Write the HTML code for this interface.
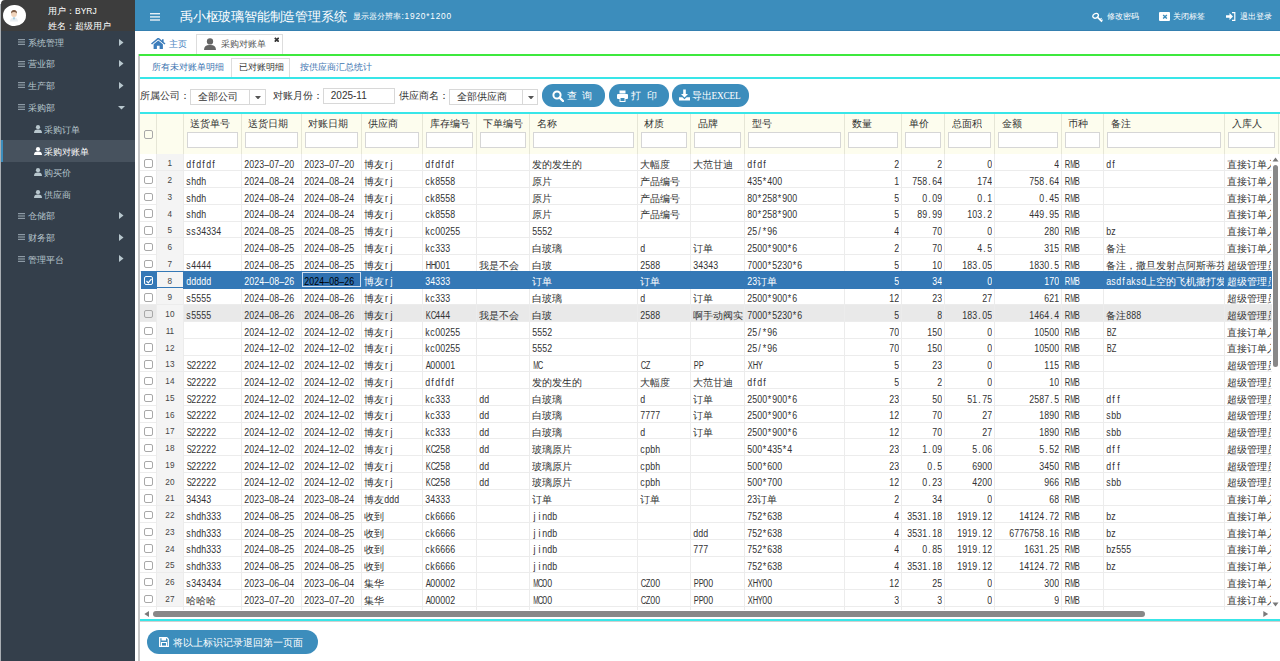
<!DOCTYPE html>
<html><head><meta charset="utf-8"><title>采购对账单</title>
<style>
*{box-sizing:border-box}
html,body{margin:0;padding:0;width:1280px;height:661px;overflow:hidden;background:#fff;font-family:"Liberation Sans",sans-serif;}
.a{position:absolute}
.sb{left:0;top:31px;width:135px;height:630px;background:#343f4b}
.up{left:1px;top:0;width:134px;height:31.2px;background:#3d3d3d;border-top-left-radius:4px}
.av{left:2.7px;top:4.6px;width:23.2px;height:21.6px;border-radius:50%;background:#fff}
.ut{color:#fff;font-size:8.5px;white-space:nowrap;line-height:10px}
.mi{color:#b8c7ce;font-size:9px;white-space:nowrap;line-height:12px}
.hd{left:135px;top:0;width:1145px;height:31px;background:#3c8dbc}
.ht{color:#fff;white-space:nowrap}
.t{position:absolute;white-space:nowrap;overflow:hidden;font-size:10px;line-height:12px;color:#4a4a4a;letter-spacing:0}
.th{font-size:10px;letter-spacing:0;color:#333}
i{display:inline-block;width:5px;text-align:center;font-style:normal;transform:scaleX(0.88)}
i b{display:inline-block;font-weight:normal;transform:scaleX(0.72);transform-origin:center}
i u{display:inline-block;text-decoration:none;transform:scaleX(0.86);transform-origin:center}
.vl{position:absolute;width:1px;background:#e4e4e4}
.hl{position:absolute;height:1px;background:#ececec}
.cb{position:absolute;width:9px;height:8.5px;border:1px solid #a8a8a8;border-radius:2px;background:transparent}
.fi{position:absolute;height:16px;border:1px solid #d6d6d6;background:#fff}
.btn{position:absolute;height:23.5px;border-radius:11px;background:#3c8dbc;color:#fff;font-size:10px;line-height:23.5px;white-space:nowrap}
</style></head><body>

<div class="a sb"></div>
<div class="a" style="left:0;top:4px;width:1px;height:657px;background:#a9aeb3"></div>
<div class="a up"></div>
<div class="a av"></div>
<svg class="a" style="left:9px;top:9px" width="10" height="13" viewBox="0 0 10 13"><path d="M1 12.5 Q1.2 8.6 5 8.3 Q8.8 8.6 9 12.5Z" fill="#e9eef2"/><path d="M4.3 8.6 L5 11 L5.7 8.6Z" fill="#5aa8c8"/><ellipse cx="5" cy="4.8" rx="2.9" ry="3.3" fill="#f1d4bb"/><path d="M2 4.6 Q1.8 1 5 1 Q8.2 1 8 4.6 Q7.4 2.8 5 2.9 Q2.6 2.8 2 4.6Z" fill="#7a5a44"/></svg>
<div class="a ut" style="left:48px;top:5.5px">用户：BYRJ</div>
<div class="a ut" style="left:48px;top:20.5px">姓名：超级用户</div>
<svg class="a" style="left:17.5px;top:39.0px" width="7.5" height="6" viewBox="0 0 7.5 6"><rect y="0" width="7.5" height="1.2" fill="#8d9aa5"/><rect y="2.4" width="7.5" height="1.2" fill="#8d9aa5"/><rect y="4.8" width="7.5" height="1.2" fill="#8d9aa5"/></svg>
<div class="a mi" style="left:28px;top:36.8px">系统管理</div>
<svg class="a" style="left:119px;top:38.5px" width="5" height="7" viewBox="0 0 5 7"><path d="M0 0L4.5 3.5L0 7Z" fill="#b8c7ce"/></svg>
<svg class="a" style="left:17.5px;top:60.6px" width="7.5" height="6" viewBox="0 0 7.5 6"><rect y="0" width="7.5" height="1.2" fill="#8d9aa5"/><rect y="2.4" width="7.5" height="1.2" fill="#8d9aa5"/><rect y="4.8" width="7.5" height="1.2" fill="#8d9aa5"/></svg>
<div class="a mi" style="left:28px;top:58.4px">营业部</div>
<svg class="a" style="left:119px;top:60.1px" width="5" height="7" viewBox="0 0 5 7"><path d="M0 0L4.5 3.5L0 7Z" fill="#b8c7ce"/></svg>
<svg class="a" style="left:17.5px;top:82.3px" width="7.5" height="6" viewBox="0 0 7.5 6"><rect y="0" width="7.5" height="1.2" fill="#8d9aa5"/><rect y="2.4" width="7.5" height="1.2" fill="#8d9aa5"/><rect y="4.8" width="7.5" height="1.2" fill="#8d9aa5"/></svg>
<div class="a mi" style="left:28px;top:80.1px">生产部</div>
<svg class="a" style="left:119px;top:81.8px" width="5" height="7" viewBox="0 0 5 7"><path d="M0 0L4.5 3.5L0 7Z" fill="#b8c7ce"/></svg>
<svg class="a" style="left:17.5px;top:104.0px" width="7.5" height="6" viewBox="0 0 7.5 6"><rect y="0" width="7.5" height="1.2" fill="#8d9aa5"/><rect y="2.4" width="7.5" height="1.2" fill="#8d9aa5"/><rect y="4.8" width="7.5" height="1.2" fill="#8d9aa5"/></svg>
<div class="a mi" style="left:28px;top:101.8px">采购部</div>
<svg class="a" style="left:118px;top:105.5px" width="7" height="4" viewBox="0 0 7 4"><path d="M0 0L7 0L3.5 3.5Z" fill="#b8c7ce"/></svg>
<svg class="a" style="left:33.5px;top:124.5px" width="8" height="8" viewBox="0 0 8 8"><circle cx="4" cy="2.2" r="2.1" fill="#b8c7ce"/><path d="M0 8 Q0 4.4 4 4.6 Q8 4.4 8 8Z" fill="#b8c7ce"/></svg>
<div class="a mi" style="left:43.5px;top:123.5px;color:#b8c7ce">采购订单</div>
<div class="a" style="left:1px;top:140px;width:134px;height:21.6px;background:#47525e"></div>
<div class="a" style="left:1px;top:140px;width:2px;height:21.6px;background:#3c8dbc"></div>
<svg class="a" style="left:33.5px;top:146.5px" width="8" height="8" viewBox="0 0 8 8"><circle cx="4" cy="2.2" r="2.1" fill="#fff"/><path d="M0 8 Q0 4.4 4 4.6 Q8 4.4 8 8Z" fill="#fff"/></svg>
<div class="a mi" style="left:43.5px;top:145.5px;color:#fff">采购对账单</div>
<svg class="a" style="left:33.5px;top:168.2px" width="8" height="8" viewBox="0 0 8 8"><circle cx="4" cy="2.2" r="2.1" fill="#b8c7ce"/><path d="M0 8 Q0 4.4 4 4.6 Q8 4.4 8 8Z" fill="#b8c7ce"/></svg>
<div class="a mi" style="left:43.5px;top:167.2px;color:#b8c7ce">购买价</div>
<svg class="a" style="left:33.5px;top:189.9px" width="8" height="8" viewBox="0 0 8 8"><circle cx="4" cy="2.2" r="2.1" fill="#b8c7ce"/><path d="M0 8 Q0 4.4 4 4.6 Q8 4.4 8 8Z" fill="#b8c7ce"/></svg>
<div class="a mi" style="left:43.5px;top:188.9px;color:#b8c7ce">供应商</div>
<svg class="a" style="left:17.5px;top:212.5px" width="7.5" height="6" viewBox="0 0 7.5 6"><rect y="0" width="7.5" height="1.2" fill="#8d9aa5"/><rect y="2.4" width="7.5" height="1.2" fill="#8d9aa5"/><rect y="4.8" width="7.5" height="1.2" fill="#8d9aa5"/></svg>
<div class="a mi" style="left:28px;top:210.3px">仓储部</div>
<svg class="a" style="left:119px;top:212.0px" width="5" height="7" viewBox="0 0 5 7"><path d="M0 0L4.5 3.5L0 7Z" fill="#b8c7ce"/></svg>
<svg class="a" style="left:17.5px;top:234.2px" width="7.5" height="6" viewBox="0 0 7.5 6"><rect y="0" width="7.5" height="1.2" fill="#8d9aa5"/><rect y="2.4" width="7.5" height="1.2" fill="#8d9aa5"/><rect y="4.8" width="7.5" height="1.2" fill="#8d9aa5"/></svg>
<div class="a mi" style="left:28px;top:232.0px">财务部</div>
<svg class="a" style="left:119px;top:233.7px" width="5" height="7" viewBox="0 0 5 7"><path d="M0 0L4.5 3.5L0 7Z" fill="#b8c7ce"/></svg>
<svg class="a" style="left:17.5px;top:255.89999999999998px" width="7.5" height="6" viewBox="0 0 7.5 6"><rect y="0" width="7.5" height="1.2" fill="#8d9aa5"/><rect y="2.4" width="7.5" height="1.2" fill="#8d9aa5"/><rect y="4.8" width="7.5" height="1.2" fill="#8d9aa5"/></svg>
<div class="a mi" style="left:28px;top:253.7px">管理平台</div>
<svg class="a" style="left:119px;top:255.39999999999998px" width="5" height="7" viewBox="0 0 5 7"><path d="M0 0L4.5 3.5L0 7Z" fill="#b8c7ce"/></svg>
<div class="a hd"></div>
<svg class="a" style="left:149.5px;top:12.5px" width="10" height="8" viewBox="0 0 10 8"><rect width="10" height="1.4" fill="#e8f0f6"/><rect y="3.2" width="10" height="1.4" fill="#e8f0f6"/><rect y="6.3" width="10" height="1.4" fill="#e8f0f6"/></svg>
<div class="a ht" style="left:180px;top:9px;font-size:13px;letter-spacing:-0.2px;line-height:16px">禹小枢玻璃智能制造管理系统</div>
<div class="a" style="left:135px;top:30px;width:1145px;height:1px;background:#3580b0"></div>
<div class="a ht" style="left:352.5px;top:11px;font-size:8px;line-height:10px">显示器分辨率<span style="display:inline-block;letter-spacing:0.8px;margin-left:1px;font-size:8.3px">:1920*1200</span></div>
<svg class="a" style="left:1092px;top:11.5px" width="12" height="11" viewBox="0 0 12 11"><ellipse cx="3.6" cy="3.8" rx="2.9" ry="2.2" transform="rotate(-35 3.6 3.8)" fill="none" stroke="#fff" stroke-width="1.3"/><path d="M5.6 5.4 L10 9.6" stroke="#fff" stroke-width="1.5"/><path d="M8 7.6 L9.6 6.3 M9.3 8.8 L10.6 7.8" stroke="#fff" stroke-width="1.1"/></svg>
<div class="a ht" style="left:1107px;top:12px;font-size:8px;line-height:10px">修改密码</div>
<div class="a" style="left:1159px;top:11.7px;width:11px;height:9px;background:#fff;border-radius:1px"></div>
<svg class="a" style="left:1161.5px;top:13.5px" width="6" height="5.5" viewBox="0 0 6 6"><path d="M1 1L5 5M5 1L1 5" stroke="#3c8dbc" stroke-width="1.5"/></svg>
<div class="a ht" style="left:1173.4px;top:12px;font-size:8px;line-height:10px">关闭标签</div>
<svg class="a" style="left:1226px;top:11.5px" width="10" height="9" viewBox="0 0 10 9"><path d="M0 3.2H3.5V1L7 4.5L3.5 8V5.8H0Z" fill="#fff"/><path d="M6 0.7H8.8V8.3H6" fill="none" stroke="#fff" stroke-width="1.2"/></svg>
<div class="a ht" style="left:1239.7px;top:12px;font-size:8px;line-height:10px">退出登录</div>
<svg class="a" style="left:151px;top:38px" width="14.5" height="11" viewBox="0 0 14.5 11"><path d="M0.5 6 L7.25 0.5 L14 6" fill="none" stroke="#3c7dbb" stroke-width="1.6"/><path d="M11 1.2h1.6v3h-1.6z" fill="#3c7dbb"/><path d="M2.6 6.2 L7.25 2.6 L11.9 6.2 V11 H8.6 V7.8 H5.9 V11 H2.6Z" fill="#3c7dbb"/></svg>
<div class="a" style="left:169px;top:37.5px;font-size:8.5px;line-height:12px;color:#4a84c0;white-space:nowrap">主页</div>
<div class="a" style="left:196.25px;top:34px;width:86.25px;height:21px;border:1px solid #ddd;border-bottom:none;background:#fff"></div>
<svg class="a" style="left:204px;top:37.5px" width="12" height="12.3" viewBox="0 0 8 8"><circle cx="4" cy="2.2" r="2.1" fill="#666"/><path d="M0 8 Q0 4.4 4 4.6 Q8 4.4 8 8Z" fill="#666"/></svg>
<div class="a" style="left:221px;top:37.5px;font-size:8.5px;line-height:12px;color:#555;white-space:nowrap">采购对账单</div>
<svg class="a" style="left:273.6px;top:36.8px" width="5.5" height="5.5" viewBox="0 0 5.5 5.5"><path d="M0.8 0.8L4.7 4.7M4.7 0.8L0.8 4.7" stroke="#333" stroke-width="1.7"/></svg>
<div class="a" style="left:138px;top:54px;width:2px;height:607px;background:#c8c8c8"></div>
<div class="a" style="left:138.75px;top:53.6px;width:1141.25px;height:2.1px;background:#3ee93e"></div>
<div class="a" style="left:152px;top:61px;font-size:8.6px;line-height:12px;color:#3d74b0;white-space:nowrap">所有未对账单明细</div>
<div class="a" style="left:231.25px;top:58px;width:58.5px;height:20px;border:1px solid #ddd;border-bottom:none;background:#fff"></div>
<div class="a" style="left:239px;top:61px;font-size:8.6px;line-height:12px;color:#333;white-space:nowrap">已对账明细</div>
<div class="a" style="left:300px;top:61px;font-size:8.6px;line-height:12px;color:#3d74b0;white-space:nowrap">按供应商汇总统计</div>
<div class="a" style="left:140px;top:76.8px;width:1140px;height:1px;background:#c8c8c8"></div>
<div class="a" style="left:140px;top:77.4px;width:1140px;height:2.1px;background:#38e6e8"></div>
<div class="a" style="left:140px;top:90px;font-size:10px;line-height:12px;color:#333;white-space:nowrap">所属公司：</div>
<div class="a" style="left:189.8px;top:89.2px;width:76.2px;height:15.7px;border:1px solid #d8d8d8;background:#fff"></div>
<div class="a" style="left:249.4px;top:89.2px;width:1px;height:15.7px;background:#d8d8d8"></div>
<svg class="a" style="left:255px;top:95.5px" width="6" height="3.5" viewBox="0 0 6 3.5"><path d="M0 0H6L3 3.5Z" fill="#555"/></svg>
<div class="a" style="left:197.5px;top:91px;font-size:10px;line-height:12px;color:#333;white-space:nowrap">全部公司</div>
<div class="a" style="left:273px;top:90px;font-size:10px;line-height:12px;color:#333;white-space:nowrap">对账月份：</div>
<div class="a" style="left:323.1px;top:87.5px;width:71.5px;height:16.3px;border:1px solid #d8d8d8;background:#fff"></div>
<div class="a" style="left:330.8px;top:89.5px;font-size:10px;line-height:12px;color:#333;white-space:nowrap">2025-11</div>
<div class="a" style="left:399.3px;top:90px;font-size:10px;line-height:12px;color:#333;white-space:nowrap">供应商名：</div>
<div class="a" style="left:449px;top:89.2px;width:89.4px;height:15.6px;border:1px solid #d8d8d8;background:#fff"></div>
<div class="a" style="left:522.2px;top:89.2px;width:1px;height:15.6px;background:#d8d8d8"></div>
<svg class="a" style="left:527.5px;top:95.5px" width="6" height="3.5" viewBox="0 0 6 3.5"><path d="M0 0H6L3 3.5Z" fill="#555"/></svg>
<div class="a" style="left:456.8px;top:91px;font-size:10px;line-height:12px;color:#333;white-space:nowrap">全部供应商</div>
<div class="btn" style="left:542px;top:83.7px;width:63px"></div>
<svg class="a" style="left:552px;top:89.5px" width="12" height="12" viewBox="0 0 12 12"><circle cx="5" cy="5" r="3.6" fill="none" stroke="#fff" stroke-width="2"/><path d="M7.6 7.6L11 11" stroke="#fff" stroke-width="2.4" stroke-linecap="round"/></svg>
<div class="a" style="left:566.5px;top:89.5px;font-size:10px;line-height:12px;color:#fff;white-space:nowrap;letter-spacing:5.5px">查询</div>
<div class="btn" style="left:608.5px;top:83.7px;width:60.2px"></div>
<svg class="a" style="left:617px;top:89.5px" width="11" height="12" viewBox="0 0 11 12"><rect x="2.5" y="0.5" width="6" height="3" fill="#fff"/><rect x="0" y="4" width="11" height="5" rx="1" fill="#fff"/><rect x="2.5" y="7" width="6" height="5" fill="#fff"/><rect x="3.5" y="8" width="4" height="3" fill="#3c8dbc"/></svg>
<div class="a" style="left:631px;top:89.5px;font-size:10px;line-height:12px;color:#fff;white-space:nowrap;letter-spacing:6px">打印</div>
<div class="btn" style="left:672.3px;top:83.7px;width:76.4px"></div>
<svg class="a" style="left:678.5px;top:89px" width="11" height="12" viewBox="0 0 11 12"><path d="M4.2 0.5H6.8V5H9L5.5 8.6L2 5H4.2Z" fill="#fff"/><path d="M0 8.2H3.4L5.5 10.2L7.6 8.2H11V11.6H0Z" fill="#fff"/></svg>
<div class="a" style="left:692px;top:89.5px;font-size:10px;line-height:12px;color:#fff;white-space:nowrap;font-family:'Liberation Serif',serif;letter-spacing:-0.2px">导出<span style="font-size:9.3px">EXCEL</span></div>
<div class="a" style="left:140px;top:111.7px;width:1140px;height:1px;background:#c0c0c0"></div>
<div class="a" style="left:140px;top:112.2px;width:1140px;height:2px;background:#38e6e8"></div>
<div class="a" style="left:140px;top:114.2px;width:1140px;height:39.7px;background:#fdfdee"></div>
<div class="vl" style="left:1278px;top:114.2px;height:39.7px;background:#e6e6d6"></div>
<div class="vl" style="left:156.0px;top:114.2px;height:39.7px;background:#e6e6d6"></div>
<div class="vl" style="left:182.8px;top:114.2px;height:39.7px;background:#e6e6d6"></div>
<div class="vl" style="left:240.75px;top:114.2px;height:39.7px;background:#e6e6d6"></div>
<div class="vl" style="left:300.75px;top:114.2px;height:39.7px;background:#e6e6d6"></div>
<div class="vl" style="left:360.75px;top:114.2px;height:39.7px;background:#e6e6d6"></div>
<div class="vl" style="left:422.0px;top:114.2px;height:39.7px;background:#e6e6d6"></div>
<div class="vl" style="left:475.75px;top:114.2px;height:39.7px;background:#e6e6d6"></div>
<div class="vl" style="left:529.0px;top:114.2px;height:39.7px;background:#e6e6d6"></div>
<div class="vl" style="left:636.5px;top:114.2px;height:39.7px;background:#e6e6d6"></div>
<div class="vl" style="left:690.0px;top:114.2px;height:39.7px;background:#e6e6d6"></div>
<div class="vl" style="left:744.0px;top:114.2px;height:39.7px;background:#e6e6d6"></div>
<div class="vl" style="left:844.0px;top:114.2px;height:39.7px;background:#e6e6d6"></div>
<div class="vl" style="left:901.25px;top:114.2px;height:39.7px;background:#e6e6d6"></div>
<div class="vl" style="left:944.0px;top:114.2px;height:39.7px;background:#e6e6d6"></div>
<div class="vl" style="left:994.0px;top:114.2px;height:39.7px;background:#e6e6d6"></div>
<div class="vl" style="left:1060.75px;top:114.2px;height:39.7px;background:#e6e6d6"></div>
<div class="vl" style="left:1103.25px;top:114.2px;height:39.7px;background:#e6e6d6"></div>
<div class="vl" style="left:1224.0px;top:114.2px;height:39.7px;background:#e6e6d6"></div>
<div class="cb" style="left:144px;top:130.2px"></div>
<div class="t th" style="left:190.3px;top:118px">送货单号</div>
<div class="fi" style="left:186.8px;top:131.5px;width:50.94999999999999px"></div>
<div class="t th" style="left:248.25px;top:118px">送货日期</div>
<div class="fi" style="left:244.75px;top:131.5px;width:53.0px"></div>
<div class="t th" style="left:308.25px;top:118px">对账日期</div>
<div class="fi" style="left:304.75px;top:131.5px;width:53.0px"></div>
<div class="t th" style="left:368.25px;top:118px">供应商</div>
<div class="fi" style="left:364.75px;top:131.5px;width:54.25px"></div>
<div class="t th" style="left:429.5px;top:118px">库存编号</div>
<div class="fi" style="left:426.0px;top:131.5px;width:46.75px"></div>
<div class="t th" style="left:483.25px;top:118px">下单编号</div>
<div class="fi" style="left:479.75px;top:131.5px;width:46.25px"></div>
<div class="t th" style="left:536.5px;top:118px">名称</div>
<div class="fi" style="left:533.0px;top:131.5px;width:100.5px"></div>
<div class="t th" style="left:644px;top:118px">材质</div>
<div class="fi" style="left:640.5px;top:131.5px;width:46.5px"></div>
<div class="t th" style="left:697.5px;top:118px">品牌</div>
<div class="fi" style="left:694.0px;top:131.5px;width:47.0px"></div>
<div class="t th" style="left:751.5px;top:118px">型号</div>
<div class="fi" style="left:748.0px;top:131.5px;width:93.0px"></div>
<div class="t th" style="left:851.5px;top:118px">数量</div>
<div class="fi" style="left:848.0px;top:131.5px;width:50.25px"></div>
<div class="t th" style="left:908.75px;top:118px">单价</div>
<div class="fi" style="left:905.25px;top:131.5px;width:35.75px"></div>
<div class="t th" style="left:951.5px;top:118px">总面积</div>
<div class="fi" style="left:948.0px;top:131.5px;width:43.0px"></div>
<div class="t th" style="left:1001.5px;top:118px">金额</div>
<div class="fi" style="left:998.0px;top:131.5px;width:59.75px"></div>
<div class="t th" style="left:1068.25px;top:118px">币种</div>
<div class="fi" style="left:1064.75px;top:131.5px;width:35.5px"></div>
<div class="t th" style="left:1110.75px;top:118px">备注</div>
<div class="fi" style="left:1107.25px;top:131.5px;width:113.75px"></div>
<div class="t th" style="left:1231.5px;top:118px">入库人</div>
<div class="fi" style="left:1228.0px;top:131.5px;width:47.0px"></div>
<div class="a" style="left:156.5px;top:153.9px;width:26.8px;height:16.75px;background:#f4f4f4"></div>
<div class="t" style="left:156.5px;top:158.4px;width:26.8px;text-align:center;font-size:8.2px;color:#444;letter-spacing:0">1</div>
<div class="cb" style="left:144px;top:159.1px"></div>
<div class="t" style="left:185.8px;width:54.94999999999999px;top:159.20000000000002px;color:#333"><i>d</i><i>f</i><i>d</i><i>f</i><i>d</i><i>f</i></div>
<div class="t" style="left:243.75px;width:57.0px;top:159.20000000000002px;color:#333"><i>2</i><i>0</i><i>2</i><i>3</i><i>&#8211;</i><i>0</i><i>7</i><i>&#8211;</i><i>2</i><i>0</i></div>
<div class="t" style="left:303.75px;width:57.0px;top:159.20000000000002px;color:#333"><i>2</i><i>0</i><i>2</i><i>3</i><i>&#8211;</i><i>0</i><i>7</i><i>&#8211;</i><i>2</i><i>0</i></div>
<div class="t" style="left:363.75px;width:58.25px;top:159.20000000000002px;color:#333">博友<i>r</i><i>j</i></div>
<div class="t" style="left:425.0px;width:50.75px;top:159.20000000000002px;color:#333"><i>d</i><i>f</i><i>d</i><i>f</i><i>d</i><i>f</i></div>
<div class="t" style="left:532.0px;width:104.5px;top:159.20000000000002px;color:#333">发的发生的</div>
<div class="t" style="left:639.5px;width:50.5px;top:159.20000000000002px;color:#333">大幅度</div>
<div class="t" style="left:693.0px;width:51.0px;top:159.20000000000002px;color:#333">大范甘迪</div>
<div class="t" style="left:747.0px;width:97.0px;top:159.20000000000002px;color:#333"><i>d</i><i>f</i><i>d</i><i>f</i></div>
<div class="t" style="left:844.5px;width:54.75px;text-align:right;top:159.20000000000002px;color:#333"><i>2</i></div>
<div class="t" style="left:901.75px;width:40.25px;text-align:right;top:159.20000000000002px;color:#333"><i>2</i></div>
<div class="t" style="left:944.5px;width:47.5px;text-align:right;top:159.20000000000002px;color:#333"><i>0</i></div>
<div class="t" style="left:994.5px;width:64.25px;text-align:right;top:159.20000000000002px;color:#333"><i>4</i></div>
<div class="t" style="left:1063.75px;width:39.5px;top:159.20000000000002px;color:#333"><i><u>R</u></i><i><b>M</b></i><i><u>B</u></i></div>
<div class="t" style="left:1106.25px;width:117.75px;top:159.20000000000002px;color:#333"><i>d</i><i>f</i></div>
<div class="t" style="left:1227.0px;width:43.5px;top:159.20000000000002px;color:#333">直接订单入库</div>
<div class="hl" style="left:140px;top:170.25px;width:1132px"></div>
<div class="a" style="left:156.5px;top:170.65px;width:26.8px;height:16.75px;background:#f4f4f4"></div>
<div class="t" style="left:156.5px;top:175.15px;width:26.8px;text-align:center;font-size:8.2px;color:#444;letter-spacing:0">2</div>
<div class="cb" style="left:144px;top:175.85px"></div>
<div class="t" style="left:185.8px;width:54.94999999999999px;top:175.95000000000002px;color:#333"><i>s</i><i>h</i><i>d</i><i>h</i></div>
<div class="t" style="left:243.75px;width:57.0px;top:175.95000000000002px;color:#333"><i>2</i><i>0</i><i>2</i><i>4</i><i>&#8211;</i><i>0</i><i>8</i><i>&#8211;</i><i>2</i><i>4</i></div>
<div class="t" style="left:303.75px;width:57.0px;top:175.95000000000002px;color:#333"><i>2</i><i>0</i><i>2</i><i>4</i><i>&#8211;</i><i>0</i><i>8</i><i>&#8211;</i><i>2</i><i>4</i></div>
<div class="t" style="left:363.75px;width:58.25px;top:175.95000000000002px;color:#333">博友<i>r</i><i>j</i></div>
<div class="t" style="left:425.0px;width:50.75px;top:175.95000000000002px;color:#333"><i>c</i><i>k</i><i>8</i><i>5</i><i>5</i><i>8</i></div>
<div class="t" style="left:532.0px;width:104.5px;top:175.95000000000002px;color:#333">原片</div>
<div class="t" style="left:639.5px;width:50.5px;top:175.95000000000002px;color:#333">产品编号</div>
<div class="t" style="left:747.0px;width:97.0px;top:175.95000000000002px;color:#333"><i>4</i><i>3</i><i>5</i><i>*</i><i>4</i><i>0</i><i>0</i></div>
<div class="t" style="left:844.5px;width:54.75px;text-align:right;top:175.95000000000002px;color:#333"><i>1</i></div>
<div class="t" style="left:901.75px;width:40.25px;text-align:right;top:175.95000000000002px;color:#333"><i>7</i><i>5</i><i>8</i><i>.</i><i>6</i><i>4</i></div>
<div class="t" style="left:944.5px;width:47.5px;text-align:right;top:175.95000000000002px;color:#333"><i>1</i><i>7</i><i>4</i></div>
<div class="t" style="left:994.5px;width:64.25px;text-align:right;top:175.95000000000002px;color:#333"><i>7</i><i>5</i><i>8</i><i>.</i><i>6</i><i>4</i></div>
<div class="t" style="left:1063.75px;width:39.5px;top:175.95000000000002px;color:#333"><i><u>R</u></i><i><b>M</b></i><i><u>B</u></i></div>
<div class="t" style="left:1227.0px;width:43.5px;top:175.95000000000002px;color:#333">直接订单入库</div>
<div class="hl" style="left:140px;top:187.0px;width:1132px"></div>
<div class="a" style="left:156.5px;top:187.4px;width:26.8px;height:16.75px;background:#f4f4f4"></div>
<div class="t" style="left:156.5px;top:191.9px;width:26.8px;text-align:center;font-size:8.2px;color:#444;letter-spacing:0">3</div>
<div class="cb" style="left:144px;top:192.6px"></div>
<div class="t" style="left:185.8px;width:54.94999999999999px;top:192.70000000000002px;color:#333"><i>s</i><i>h</i><i>d</i><i>h</i></div>
<div class="t" style="left:243.75px;width:57.0px;top:192.70000000000002px;color:#333"><i>2</i><i>0</i><i>2</i><i>4</i><i>&#8211;</i><i>0</i><i>8</i><i>&#8211;</i><i>2</i><i>4</i></div>
<div class="t" style="left:303.75px;width:57.0px;top:192.70000000000002px;color:#333"><i>2</i><i>0</i><i>2</i><i>4</i><i>&#8211;</i><i>0</i><i>8</i><i>&#8211;</i><i>2</i><i>4</i></div>
<div class="t" style="left:363.75px;width:58.25px;top:192.70000000000002px;color:#333">博友<i>r</i><i>j</i></div>
<div class="t" style="left:425.0px;width:50.75px;top:192.70000000000002px;color:#333"><i>c</i><i>k</i><i>8</i><i>5</i><i>5</i><i>8</i></div>
<div class="t" style="left:532.0px;width:104.5px;top:192.70000000000002px;color:#333">原片</div>
<div class="t" style="left:639.5px;width:50.5px;top:192.70000000000002px;color:#333">产品编号</div>
<div class="t" style="left:747.0px;width:97.0px;top:192.70000000000002px;color:#333"><i>8</i><i>0</i><i>*</i><i>2</i><i>5</i><i>8</i><i>*</i><i>9</i><i>0</i><i>0</i></div>
<div class="t" style="left:844.5px;width:54.75px;text-align:right;top:192.70000000000002px;color:#333"><i>5</i></div>
<div class="t" style="left:901.75px;width:40.25px;text-align:right;top:192.70000000000002px;color:#333"><i>0</i><i>.</i><i>0</i><i>9</i></div>
<div class="t" style="left:944.5px;width:47.5px;text-align:right;top:192.70000000000002px;color:#333"><i>0</i><i>.</i><i>1</i></div>
<div class="t" style="left:994.5px;width:64.25px;text-align:right;top:192.70000000000002px;color:#333"><i>0</i><i>.</i><i>4</i><i>5</i></div>
<div class="t" style="left:1063.75px;width:39.5px;top:192.70000000000002px;color:#333"><i><u>R</u></i><i><b>M</b></i><i><u>B</u></i></div>
<div class="t" style="left:1227.0px;width:43.5px;top:192.70000000000002px;color:#333">直接订单入库</div>
<div class="hl" style="left:140px;top:203.75px;width:1132px"></div>
<div class="a" style="left:156.5px;top:204.15px;width:26.8px;height:16.75px;background:#f4f4f4"></div>
<div class="t" style="left:156.5px;top:208.65px;width:26.8px;text-align:center;font-size:8.2px;color:#444;letter-spacing:0">4</div>
<div class="cb" style="left:144px;top:209.35px"></div>
<div class="t" style="left:185.8px;width:54.94999999999999px;top:209.45000000000002px;color:#333"><i>s</i><i>h</i><i>d</i><i>h</i></div>
<div class="t" style="left:243.75px;width:57.0px;top:209.45000000000002px;color:#333"><i>2</i><i>0</i><i>2</i><i>4</i><i>&#8211;</i><i>0</i><i>8</i><i>&#8211;</i><i>2</i><i>4</i></div>
<div class="t" style="left:303.75px;width:57.0px;top:209.45000000000002px;color:#333"><i>2</i><i>0</i><i>2</i><i>4</i><i>&#8211;</i><i>0</i><i>8</i><i>&#8211;</i><i>2</i><i>4</i></div>
<div class="t" style="left:363.75px;width:58.25px;top:209.45000000000002px;color:#333">博友<i>r</i><i>j</i></div>
<div class="t" style="left:425.0px;width:50.75px;top:209.45000000000002px;color:#333"><i>c</i><i>k</i><i>8</i><i>5</i><i>5</i><i>8</i></div>
<div class="t" style="left:532.0px;width:104.5px;top:209.45000000000002px;color:#333">原片</div>
<div class="t" style="left:639.5px;width:50.5px;top:209.45000000000002px;color:#333">产品编号</div>
<div class="t" style="left:747.0px;width:97.0px;top:209.45000000000002px;color:#333"><i>8</i><i>0</i><i>*</i><i>2</i><i>5</i><i>8</i><i>*</i><i>9</i><i>0</i><i>0</i></div>
<div class="t" style="left:844.5px;width:54.75px;text-align:right;top:209.45000000000002px;color:#333"><i>5</i></div>
<div class="t" style="left:901.75px;width:40.25px;text-align:right;top:209.45000000000002px;color:#333"><i>8</i><i>9</i><i>.</i><i>9</i><i>9</i></div>
<div class="t" style="left:944.5px;width:47.5px;text-align:right;top:209.45000000000002px;color:#333"><i>1</i><i>0</i><i>3</i><i>.</i><i>2</i></div>
<div class="t" style="left:994.5px;width:64.25px;text-align:right;top:209.45000000000002px;color:#333"><i>4</i><i>4</i><i>9</i><i>.</i><i>9</i><i>5</i></div>
<div class="t" style="left:1063.75px;width:39.5px;top:209.45000000000002px;color:#333"><i><u>R</u></i><i><b>M</b></i><i><u>B</u></i></div>
<div class="t" style="left:1227.0px;width:43.5px;top:209.45000000000002px;color:#333">直接订单入库</div>
<div class="hl" style="left:140px;top:220.5px;width:1132px"></div>
<div class="a" style="left:156.5px;top:220.9px;width:26.8px;height:16.75px;background:#f4f4f4"></div>
<div class="t" style="left:156.5px;top:225.4px;width:26.8px;text-align:center;font-size:8.2px;color:#444;letter-spacing:0">5</div>
<div class="cb" style="left:144px;top:226.1px"></div>
<div class="t" style="left:185.8px;width:54.94999999999999px;top:226.20000000000002px;color:#333"><i>s</i><i>s</i><i>3</i><i>4</i><i>3</i><i>3</i><i>4</i></div>
<div class="t" style="left:243.75px;width:57.0px;top:226.20000000000002px;color:#333"><i>2</i><i>0</i><i>2</i><i>4</i><i>&#8211;</i><i>0</i><i>8</i><i>&#8211;</i><i>2</i><i>5</i></div>
<div class="t" style="left:303.75px;width:57.0px;top:226.20000000000002px;color:#333"><i>2</i><i>0</i><i>2</i><i>4</i><i>&#8211;</i><i>0</i><i>8</i><i>&#8211;</i><i>2</i><i>5</i></div>
<div class="t" style="left:363.75px;width:58.25px;top:226.20000000000002px;color:#333">博友<i>r</i><i>j</i></div>
<div class="t" style="left:425.0px;width:50.75px;top:226.20000000000002px;color:#333"><i>k</i><i>c</i><i>0</i><i>0</i><i>2</i><i>5</i><i>5</i></div>
<div class="t" style="left:532.0px;width:104.5px;top:226.20000000000002px;color:#333"><i>5</i><i>5</i><i>5</i><i>2</i></div>
<div class="t" style="left:747.0px;width:97.0px;top:226.20000000000002px;color:#333"><i>2</i><i>5</i><i>/</i><i>*</i><i>9</i><i>6</i></div>
<div class="t" style="left:844.5px;width:54.75px;text-align:right;top:226.20000000000002px;color:#333"><i>4</i></div>
<div class="t" style="left:901.75px;width:40.25px;text-align:right;top:226.20000000000002px;color:#333"><i>7</i><i>0</i></div>
<div class="t" style="left:944.5px;width:47.5px;text-align:right;top:226.20000000000002px;color:#333"><i>0</i></div>
<div class="t" style="left:994.5px;width:64.25px;text-align:right;top:226.20000000000002px;color:#333"><i>2</i><i>8</i><i>0</i></div>
<div class="t" style="left:1063.75px;width:39.5px;top:226.20000000000002px;color:#333"><i><u>R</u></i><i><b>M</b></i><i><u>B</u></i></div>
<div class="t" style="left:1106.25px;width:117.75px;top:226.20000000000002px;color:#333"><i>b</i><i>z</i></div>
<div class="t" style="left:1227.0px;width:43.5px;top:226.20000000000002px;color:#333">直接订单入库</div>
<div class="hl" style="left:140px;top:237.25px;width:1132px"></div>
<div class="a" style="left:156.5px;top:237.65px;width:26.8px;height:16.75px;background:#f4f4f4"></div>
<div class="t" style="left:156.5px;top:242.15px;width:26.8px;text-align:center;font-size:8.2px;color:#444;letter-spacing:0">6</div>
<div class="cb" style="left:144px;top:242.85px"></div>
<div class="t" style="left:243.75px;width:57.0px;top:242.95000000000002px;color:#333"><i>2</i><i>0</i><i>2</i><i>4</i><i>&#8211;</i><i>0</i><i>8</i><i>&#8211;</i><i>2</i><i>5</i></div>
<div class="t" style="left:303.75px;width:57.0px;top:242.95000000000002px;color:#333"><i>2</i><i>0</i><i>2</i><i>4</i><i>&#8211;</i><i>0</i><i>8</i><i>&#8211;</i><i>2</i><i>5</i></div>
<div class="t" style="left:363.75px;width:58.25px;top:242.95000000000002px;color:#333">博友<i>r</i><i>j</i></div>
<div class="t" style="left:425.0px;width:50.75px;top:242.95000000000002px;color:#333"><i>k</i><i>c</i><i>3</i><i>3</i><i>3</i></div>
<div class="t" style="left:532.0px;width:104.5px;top:242.95000000000002px;color:#333">白玻璃</div>
<div class="t" style="left:639.5px;width:50.5px;top:242.95000000000002px;color:#333"><i>d</i></div>
<div class="t" style="left:693.0px;width:51.0px;top:242.95000000000002px;color:#333">订单</div>
<div class="t" style="left:747.0px;width:97.0px;top:242.95000000000002px;color:#333"><i>2</i><i>5</i><i>0</i><i>0</i><i>*</i><i>9</i><i>0</i><i>0</i><i>*</i><i>6</i></div>
<div class="t" style="left:844.5px;width:54.75px;text-align:right;top:242.95000000000002px;color:#333"><i>2</i></div>
<div class="t" style="left:901.75px;width:40.25px;text-align:right;top:242.95000000000002px;color:#333"><i>7</i><i>0</i></div>
<div class="t" style="left:944.5px;width:47.5px;text-align:right;top:242.95000000000002px;color:#333"><i>4</i><i>.</i><i>5</i></div>
<div class="t" style="left:994.5px;width:64.25px;text-align:right;top:242.95000000000002px;color:#333"><i>3</i><i>1</i><i>5</i></div>
<div class="t" style="left:1063.75px;width:39.5px;top:242.95000000000002px;color:#333"><i><u>R</u></i><i><b>M</b></i><i><u>B</u></i></div>
<div class="t" style="left:1106.25px;width:117.75px;top:242.95000000000002px;color:#333">备注</div>
<div class="t" style="left:1227.0px;width:43.5px;top:242.95000000000002px;color:#333">直接订单入库</div>
<div class="hl" style="left:140px;top:254.0px;width:1132px"></div>
<div class="a" style="left:156.5px;top:254.4px;width:26.8px;height:16.75px;background:#f4f4f4"></div>
<div class="t" style="left:156.5px;top:258.9px;width:26.8px;text-align:center;font-size:8.2px;color:#444;letter-spacing:0">7</div>
<div class="cb" style="left:144px;top:259.6px"></div>
<div class="t" style="left:185.8px;width:54.94999999999999px;top:259.7px;color:#333"><i>s</i><i>4</i><i>4</i><i>4</i><i>4</i></div>
<div class="t" style="left:243.75px;width:57.0px;top:259.7px;color:#333"><i>2</i><i>0</i><i>2</i><i>4</i><i>&#8211;</i><i>0</i><i>8</i><i>&#8211;</i><i>2</i><i>5</i></div>
<div class="t" style="left:303.75px;width:57.0px;top:259.7px;color:#333"><i>2</i><i>0</i><i>2</i><i>4</i><i>&#8211;</i><i>0</i><i>8</i><i>&#8211;</i><i>2</i><i>5</i></div>
<div class="t" style="left:363.75px;width:58.25px;top:259.7px;color:#333">博友<i>r</i><i>j</i></div>
<div class="t" style="left:425.0px;width:50.75px;top:259.7px;color:#333"><i><u>H</u></i><i><u>H</u></i><i>0</i><i>0</i><i>1</i></div>
<div class="t" style="left:478.75px;width:50.25px;top:259.7px;color:#333">我是不会</div>
<div class="t" style="left:532.0px;width:104.5px;top:259.7px;color:#333">白玻</div>
<div class="t" style="left:639.5px;width:50.5px;top:259.7px;color:#333"><i>2</i><i>5</i><i>8</i><i>8</i></div>
<div class="t" style="left:693.0px;width:51.0px;top:259.7px;color:#333"><i>3</i><i>4</i><i>3</i><i>4</i><i>3</i></div>
<div class="t" style="left:747.0px;width:97.0px;top:259.7px;color:#333"><i>7</i><i>0</i><i>0</i><i>0</i><i>*</i><i>5</i><i>2</i><i>3</i><i>0</i><i>*</i><i>6</i></div>
<div class="t" style="left:844.5px;width:54.75px;text-align:right;top:259.7px;color:#333"><i>5</i></div>
<div class="t" style="left:901.75px;width:40.25px;text-align:right;top:259.7px;color:#333"><i>1</i><i>0</i></div>
<div class="t" style="left:944.5px;width:47.5px;text-align:right;top:259.7px;color:#333"><i>1</i><i>8</i><i>3</i><i>.</i><i>0</i><i>5</i></div>
<div class="t" style="left:994.5px;width:64.25px;text-align:right;top:259.7px;color:#333"><i>1</i><i>8</i><i>3</i><i>0</i><i>.</i><i>5</i></div>
<div class="t" style="left:1063.75px;width:39.5px;top:259.7px;color:#333"><i><u>R</u></i><i><b>M</b></i><i><u>B</u></i></div>
<div class="t" style="left:1106.25px;width:117.75px;top:259.7px;color:#333">备注，撒旦发射点阿斯蒂芬</div>
<div class="t" style="left:1227.0px;width:43.5px;top:259.7px;color:#333">超级管理员</div>
<div class="hl" style="left:140px;top:270.75px;width:1132px"></div>
<div class="a" style="left:141px;top:271.15px;width:1131px;height:17.55px;background:#3478b6"></div>
<div class="a" style="left:157px;top:272.15px;width:25.8px;height:15.35px;background:#f4f4f4"></div>
<div class="t" style="left:156.5px;top:275.65px;width:26.8px;text-align:center;font-size:8.2px;color:#444;letter-spacing:0">8</div>
<div class="cb" style="left:144px;top:276.34999999999997px;border-color:#fff;background:transparent"></div>
<svg class="a" style="left:145.5px;top:277.84999999999997px" width="6" height="6" viewBox="0 0 6 6"><path d="M0.5 3L2.3 4.8L5.5 0.8" fill="none" stroke="#fff" stroke-width="1.2"/></svg>
<div class="t" style="left:185.8px;width:54.94999999999999px;top:276.45px;color:#fff"><i>d</i><i>d</i><i>d</i><i>d</i><i>d</i></div>
<div class="t" style="left:243.75px;width:57.0px;top:276.45px;color:#fff"><i>2</i><i>0</i><i>2</i><i>4</i><i>&#8211;</i><i>0</i><i>8</i><i>&#8211;</i><i>2</i><i>6</i></div>
<div class="a" style="left:302.25px;top:271.65px;width:58.5px;height:15.75px;border:1px solid #cfdff0;background:#2f70b0"></div>
<div class="t" style="left:303.75px;width:57.0px;top:276.45px;color:#000"><i>2</i><i>0</i><i>2</i><i>4</i><i>&#8211;</i><i>0</i><i>8</i><i>&#8211;</i><i>2</i><i>6</i></div>
<div class="t" style="left:363.75px;width:58.25px;top:276.45px;color:#fff">博友<i>r</i><i>j</i></div>
<div class="t" style="left:425.0px;width:50.75px;top:276.45px;color:#fff"><i>3</i><i>4</i><i>3</i><i>3</i><i>3</i></div>
<div class="t" style="left:532.0px;width:104.5px;top:276.45px;color:#fff">订单</div>
<div class="t" style="left:639.5px;width:50.5px;top:276.45px;color:#fff">订单</div>
<div class="t" style="left:747.0px;width:97.0px;top:276.45px;color:#fff"><i>2</i><i>3</i>订单</div>
<div class="t" style="left:844.5px;width:54.75px;text-align:right;top:276.45px;color:#fff"><i>5</i></div>
<div class="t" style="left:901.75px;width:40.25px;text-align:right;top:276.45px;color:#fff"><i>3</i><i>4</i></div>
<div class="t" style="left:944.5px;width:47.5px;text-align:right;top:276.45px;color:#fff"><i>0</i></div>
<div class="t" style="left:994.5px;width:64.25px;text-align:right;top:276.45px;color:#fff"><i>1</i><i>7</i><i>0</i></div>
<div class="t" style="left:1063.75px;width:39.5px;top:276.45px;color:#fff"><i><u>R</u></i><i><b>M</b></i><i><u>B</u></i></div>
<div class="t" style="left:1106.25px;width:117.75px;top:276.45px;color:#fff"><i>a</i><i>s</i><i>d</i><i>f</i><i>a</i><i>k</i><i>s</i><i>d</i>上空的飞机撒打发</div>
<div class="t" style="left:1227.0px;width:43.5px;top:276.45px;color:#fff">超级管理员</div>
<div class="a" style="left:156.5px;top:287.9px;width:26.8px;height:16.75px;background:#f4f4f4"></div>
<div class="t" style="left:156.5px;top:292.4px;width:26.8px;text-align:center;font-size:8.2px;color:#444;letter-spacing:0">9</div>
<div class="cb" style="left:144px;top:293.09999999999997px"></div>
<div class="t" style="left:185.8px;width:54.94999999999999px;top:293.2px;color:#333"><i>s</i><i>5</i><i>5</i><i>5</i><i>5</i></div>
<div class="t" style="left:243.75px;width:57.0px;top:293.2px;color:#333"><i>2</i><i>0</i><i>2</i><i>4</i><i>&#8211;</i><i>0</i><i>8</i><i>&#8211;</i><i>2</i><i>6</i></div>
<div class="t" style="left:303.75px;width:57.0px;top:293.2px;color:#333"><i>2</i><i>0</i><i>2</i><i>4</i><i>&#8211;</i><i>0</i><i>8</i><i>&#8211;</i><i>2</i><i>6</i></div>
<div class="t" style="left:363.75px;width:58.25px;top:293.2px;color:#333">博友<i>r</i><i>j</i></div>
<div class="t" style="left:425.0px;width:50.75px;top:293.2px;color:#333"><i>k</i><i>c</i><i>3</i><i>3</i><i>3</i></div>
<div class="t" style="left:532.0px;width:104.5px;top:293.2px;color:#333">白玻璃</div>
<div class="t" style="left:639.5px;width:50.5px;top:293.2px;color:#333"><i>d</i></div>
<div class="t" style="left:693.0px;width:51.0px;top:293.2px;color:#333">订单</div>
<div class="t" style="left:747.0px;width:97.0px;top:293.2px;color:#333"><i>2</i><i>5</i><i>0</i><i>0</i><i>*</i><i>9</i><i>0</i><i>0</i><i>*</i><i>6</i></div>
<div class="t" style="left:844.5px;width:54.75px;text-align:right;top:293.2px;color:#333"><i>1</i><i>2</i></div>
<div class="t" style="left:901.75px;width:40.25px;text-align:right;top:293.2px;color:#333"><i>2</i><i>3</i></div>
<div class="t" style="left:944.5px;width:47.5px;text-align:right;top:293.2px;color:#333"><i>2</i><i>7</i></div>
<div class="t" style="left:994.5px;width:64.25px;text-align:right;top:293.2px;color:#333"><i>6</i><i>2</i><i>1</i></div>
<div class="t" style="left:1063.75px;width:39.5px;top:293.2px;color:#333"><i><u>R</u></i><i><b>M</b></i><i><u>B</u></i></div>
<div class="t" style="left:1227.0px;width:43.5px;top:293.2px;color:#333">超级管理员</div>
<div class="hl" style="left:140px;top:304.25px;width:1132px"></div>
<div class="a" style="left:140px;top:305.25px;width:1132px;height:16.15px;background:#e9e9e9"></div>
<div class="a" style="left:156.5px;top:304.65px;width:26.8px;height:16.75px;background:#f4f4f4"></div>
<div class="t" style="left:156.5px;top:309.15px;width:26.8px;text-align:center;font-size:8.2px;color:#444;letter-spacing:0">10</div>
<div class="cb" style="left:144px;top:309.84999999999997px"></div>
<div class="t" style="left:185.8px;width:54.94999999999999px;top:309.95px;color:#333"><i>s</i><i>5</i><i>5</i><i>5</i><i>5</i></div>
<div class="t" style="left:243.75px;width:57.0px;top:309.95px;color:#333"><i>2</i><i>0</i><i>2</i><i>4</i><i>&#8211;</i><i>0</i><i>8</i><i>&#8211;</i><i>2</i><i>6</i></div>
<div class="t" style="left:303.75px;width:57.0px;top:309.95px;color:#333"><i>2</i><i>0</i><i>2</i><i>4</i><i>&#8211;</i><i>0</i><i>8</i><i>&#8211;</i><i>2</i><i>6</i></div>
<div class="t" style="left:363.75px;width:58.25px;top:309.95px;color:#333">博友<i>r</i><i>j</i></div>
<div class="t" style="left:425.0px;width:50.75px;top:309.95px;color:#333"><i><u>K</u></i><i><u>C</u></i><i>4</i><i>4</i><i>4</i></div>
<div class="t" style="left:478.75px;width:50.25px;top:309.95px;color:#333">我是不会</div>
<div class="t" style="left:532.0px;width:104.5px;top:309.95px;color:#333">白玻</div>
<div class="t" style="left:639.5px;width:50.5px;top:309.95px;color:#333"><i>2</i><i>5</i><i>8</i><i>8</i></div>
<div class="t" style="left:693.0px;width:51.0px;top:309.95px;color:#333">啊手动阀实</div>
<div class="t" style="left:747.0px;width:97.0px;top:309.95px;color:#333"><i>7</i><i>0</i><i>0</i><i>0</i><i>*</i><i>5</i><i>2</i><i>3</i><i>0</i><i>*</i><i>6</i></div>
<div class="t" style="left:844.5px;width:54.75px;text-align:right;top:309.95px;color:#333"><i>5</i></div>
<div class="t" style="left:901.75px;width:40.25px;text-align:right;top:309.95px;color:#333"><i>8</i></div>
<div class="t" style="left:944.5px;width:47.5px;text-align:right;top:309.95px;color:#333"><i>1</i><i>8</i><i>3</i><i>.</i><i>0</i><i>5</i></div>
<div class="t" style="left:994.5px;width:64.25px;text-align:right;top:309.95px;color:#333"><i>1</i><i>4</i><i>6</i><i>4</i><i>.</i><i>4</i></div>
<div class="t" style="left:1063.75px;width:39.5px;top:309.95px;color:#333"><i><u>R</u></i><i><b>M</b></i><i><u>B</u></i></div>
<div class="t" style="left:1106.25px;width:117.75px;top:309.95px;color:#333">备注<i>8</i><i>8</i><i>8</i></div>
<div class="t" style="left:1227.0px;width:43.5px;top:309.95px;color:#333">超级管理员</div>
<div class="hl" style="left:140px;top:321.0px;width:1132px"></div>
<div class="a" style="left:156.5px;top:321.4px;width:26.8px;height:16.75px;background:#f4f4f4"></div>
<div class="t" style="left:156.5px;top:325.9px;width:26.8px;text-align:center;font-size:8.2px;color:#444;letter-spacing:0">11</div>
<div class="cb" style="left:144px;top:326.59999999999997px"></div>
<div class="t" style="left:243.75px;width:57.0px;top:326.7px;color:#333"><i>2</i><i>0</i><i>2</i><i>4</i><i>&#8211;</i><i>1</i><i>2</i><i>&#8211;</i><i>0</i><i>2</i></div>
<div class="t" style="left:303.75px;width:57.0px;top:326.7px;color:#333"><i>2</i><i>0</i><i>2</i><i>4</i><i>&#8211;</i><i>1</i><i>2</i><i>&#8211;</i><i>0</i><i>2</i></div>
<div class="t" style="left:363.75px;width:58.25px;top:326.7px;color:#333">博友<i>r</i><i>j</i></div>
<div class="t" style="left:425.0px;width:50.75px;top:326.7px;color:#333"><i>k</i><i>c</i><i>0</i><i>0</i><i>2</i><i>5</i><i>5</i></div>
<div class="t" style="left:532.0px;width:104.5px;top:326.7px;color:#333"><i>5</i><i>5</i><i>5</i><i>2</i></div>
<div class="t" style="left:747.0px;width:97.0px;top:326.7px;color:#333"><i>2</i><i>5</i><i>/</i><i>*</i><i>9</i><i>6</i></div>
<div class="t" style="left:844.5px;width:54.75px;text-align:right;top:326.7px;color:#333"><i>7</i><i>0</i></div>
<div class="t" style="left:901.75px;width:40.25px;text-align:right;top:326.7px;color:#333"><i>1</i><i>5</i><i>0</i></div>
<div class="t" style="left:944.5px;width:47.5px;text-align:right;top:326.7px;color:#333"><i>0</i></div>
<div class="t" style="left:994.5px;width:64.25px;text-align:right;top:326.7px;color:#333"><i>1</i><i>0</i><i>5</i><i>0</i><i>0</i></div>
<div class="t" style="left:1063.75px;width:39.5px;top:326.7px;color:#333"><i><u>R</u></i><i><b>M</b></i><i><u>B</u></i></div>
<div class="t" style="left:1106.25px;width:117.75px;top:326.7px;color:#333"><i><u>B</u></i><i><u>Z</u></i></div>
<div class="t" style="left:1227.0px;width:43.5px;top:326.7px;color:#333">直接订单入库</div>
<div class="hl" style="left:140px;top:337.75px;width:1132px"></div>
<div class="a" style="left:156.5px;top:338.15px;width:26.8px;height:16.75px;background:#f4f4f4"></div>
<div class="t" style="left:156.5px;top:342.65px;width:26.8px;text-align:center;font-size:8.2px;color:#444;letter-spacing:0">12</div>
<div class="cb" style="left:144px;top:343.34999999999997px"></div>
<div class="t" style="left:243.75px;width:57.0px;top:343.45px;color:#333"><i>2</i><i>0</i><i>2</i><i>4</i><i>&#8211;</i><i>1</i><i>2</i><i>&#8211;</i><i>0</i><i>2</i></div>
<div class="t" style="left:303.75px;width:57.0px;top:343.45px;color:#333"><i>2</i><i>0</i><i>2</i><i>4</i><i>&#8211;</i><i>1</i><i>2</i><i>&#8211;</i><i>0</i><i>2</i></div>
<div class="t" style="left:363.75px;width:58.25px;top:343.45px;color:#333">博友<i>r</i><i>j</i></div>
<div class="t" style="left:425.0px;width:50.75px;top:343.45px;color:#333"><i>k</i><i>c</i><i>0</i><i>0</i><i>2</i><i>5</i><i>5</i></div>
<div class="t" style="left:532.0px;width:104.5px;top:343.45px;color:#333"><i>5</i><i>5</i><i>5</i><i>2</i></div>
<div class="t" style="left:747.0px;width:97.0px;top:343.45px;color:#333"><i>2</i><i>5</i><i>/</i><i>*</i><i>9</i><i>6</i></div>
<div class="t" style="left:844.5px;width:54.75px;text-align:right;top:343.45px;color:#333"><i>7</i><i>0</i></div>
<div class="t" style="left:901.75px;width:40.25px;text-align:right;top:343.45px;color:#333"><i>1</i><i>5</i><i>0</i></div>
<div class="t" style="left:944.5px;width:47.5px;text-align:right;top:343.45px;color:#333"><i>0</i></div>
<div class="t" style="left:994.5px;width:64.25px;text-align:right;top:343.45px;color:#333"><i>1</i><i>0</i><i>5</i><i>0</i><i>0</i></div>
<div class="t" style="left:1063.75px;width:39.5px;top:343.45px;color:#333"><i><u>R</u></i><i><b>M</b></i><i><u>B</u></i></div>
<div class="t" style="left:1106.25px;width:117.75px;top:343.45px;color:#333"><i><u>B</u></i><i><u>Z</u></i></div>
<div class="t" style="left:1227.0px;width:43.5px;top:343.45px;color:#333">直接订单入库</div>
<div class="hl" style="left:140px;top:354.5px;width:1132px"></div>
<div class="a" style="left:156.5px;top:354.9px;width:26.8px;height:16.75px;background:#f4f4f4"></div>
<div class="t" style="left:156.5px;top:359.4px;width:26.8px;text-align:center;font-size:8.2px;color:#444;letter-spacing:0">13</div>
<div class="cb" style="left:144px;top:360.09999999999997px"></div>
<div class="t" style="left:185.8px;width:54.94999999999999px;top:360.2px;color:#333"><i><u>S</u></i><i>2</i><i>2</i><i>2</i><i>2</i><i>2</i></div>
<div class="t" style="left:243.75px;width:57.0px;top:360.2px;color:#333"><i>2</i><i>0</i><i>2</i><i>4</i><i>&#8211;</i><i>1</i><i>2</i><i>&#8211;</i><i>0</i><i>2</i></div>
<div class="t" style="left:303.75px;width:57.0px;top:360.2px;color:#333"><i>2</i><i>0</i><i>2</i><i>4</i><i>&#8211;</i><i>1</i><i>2</i><i>&#8211;</i><i>0</i><i>2</i></div>
<div class="t" style="left:363.75px;width:58.25px;top:360.2px;color:#333">博友<i>r</i><i>j</i></div>
<div class="t" style="left:425.0px;width:50.75px;top:360.2px;color:#333"><i><u>A</u></i><i>0</i><i>0</i><i>0</i><i>0</i><i>1</i></div>
<div class="t" style="left:532.0px;width:104.5px;top:360.2px;color:#333"><i><b>M</b></i><i><u>C</u></i></div>
<div class="t" style="left:639.5px;width:50.5px;top:360.2px;color:#333"><i><u>C</u></i><i><u>Z</u></i></div>
<div class="t" style="left:693.0px;width:51.0px;top:360.2px;color:#333"><i><u>P</u></i><i><u>P</u></i></div>
<div class="t" style="left:747.0px;width:97.0px;top:360.2px;color:#333"><i><u>X</u></i><i><u>H</u></i><i><u>Y</u></i></div>
<div class="t" style="left:844.5px;width:54.75px;text-align:right;top:360.2px;color:#333"><i>5</i></div>
<div class="t" style="left:901.75px;width:40.25px;text-align:right;top:360.2px;color:#333"><i>2</i><i>3</i></div>
<div class="t" style="left:944.5px;width:47.5px;text-align:right;top:360.2px;color:#333"><i>0</i></div>
<div class="t" style="left:994.5px;width:64.25px;text-align:right;top:360.2px;color:#333"><i>1</i><i>1</i><i>5</i></div>
<div class="t" style="left:1063.75px;width:39.5px;top:360.2px;color:#333"><i><u>R</u></i><i><b>M</b></i><i><u>B</u></i></div>
<div class="t" style="left:1227.0px;width:43.5px;top:360.2px;color:#333">超级管理员</div>
<div class="hl" style="left:140px;top:371.25px;width:1132px"></div>
<div class="a" style="left:156.5px;top:371.65px;width:26.8px;height:16.75px;background:#f4f4f4"></div>
<div class="t" style="left:156.5px;top:376.15px;width:26.8px;text-align:center;font-size:8.2px;color:#444;letter-spacing:0">14</div>
<div class="cb" style="left:144px;top:376.84999999999997px"></div>
<div class="t" style="left:185.8px;width:54.94999999999999px;top:376.95px;color:#333"><i><u>S</u></i><i>2</i><i>2</i><i>2</i><i>2</i><i>2</i></div>
<div class="t" style="left:243.75px;width:57.0px;top:376.95px;color:#333"><i>2</i><i>0</i><i>2</i><i>4</i><i>&#8211;</i><i>1</i><i>2</i><i>&#8211;</i><i>0</i><i>2</i></div>
<div class="t" style="left:303.75px;width:57.0px;top:376.95px;color:#333"><i>2</i><i>0</i><i>2</i><i>4</i><i>&#8211;</i><i>1</i><i>2</i><i>&#8211;</i><i>0</i><i>2</i></div>
<div class="t" style="left:363.75px;width:58.25px;top:376.95px;color:#333">博友<i>r</i><i>j</i></div>
<div class="t" style="left:425.0px;width:50.75px;top:376.95px;color:#333"><i>d</i><i>f</i><i>d</i><i>f</i><i>d</i><i>f</i></div>
<div class="t" style="left:532.0px;width:104.5px;top:376.95px;color:#333">发的发生的</div>
<div class="t" style="left:639.5px;width:50.5px;top:376.95px;color:#333">大幅度</div>
<div class="t" style="left:693.0px;width:51.0px;top:376.95px;color:#333">大范甘迪</div>
<div class="t" style="left:747.0px;width:97.0px;top:376.95px;color:#333"><i>d</i><i>f</i><i>d</i><i>f</i></div>
<div class="t" style="left:844.5px;width:54.75px;text-align:right;top:376.95px;color:#333"><i>5</i></div>
<div class="t" style="left:901.75px;width:40.25px;text-align:right;top:376.95px;color:#333"><i>2</i></div>
<div class="t" style="left:944.5px;width:47.5px;text-align:right;top:376.95px;color:#333"><i>0</i></div>
<div class="t" style="left:994.5px;width:64.25px;text-align:right;top:376.95px;color:#333"><i>1</i><i>0</i></div>
<div class="t" style="left:1063.75px;width:39.5px;top:376.95px;color:#333"><i><u>R</u></i><i><b>M</b></i><i><u>B</u></i></div>
<div class="t" style="left:1227.0px;width:43.5px;top:376.95px;color:#333">超级管理员</div>
<div class="hl" style="left:140px;top:388.0px;width:1132px"></div>
<div class="a" style="left:156.5px;top:388.4px;width:26.8px;height:16.75px;background:#f4f4f4"></div>
<div class="t" style="left:156.5px;top:392.9px;width:26.8px;text-align:center;font-size:8.2px;color:#444;letter-spacing:0">15</div>
<div class="cb" style="left:144px;top:393.59999999999997px"></div>
<div class="t" style="left:185.8px;width:54.94999999999999px;top:393.7px;color:#333"><i><u>S</u></i><i>2</i><i>2</i><i>2</i><i>2</i><i>2</i></div>
<div class="t" style="left:243.75px;width:57.0px;top:393.7px;color:#333"><i>2</i><i>0</i><i>2</i><i>4</i><i>&#8211;</i><i>1</i><i>2</i><i>&#8211;</i><i>0</i><i>2</i></div>
<div class="t" style="left:303.75px;width:57.0px;top:393.7px;color:#333"><i>2</i><i>0</i><i>2</i><i>4</i><i>&#8211;</i><i>1</i><i>2</i><i>&#8211;</i><i>0</i><i>2</i></div>
<div class="t" style="left:363.75px;width:58.25px;top:393.7px;color:#333">博友<i>r</i><i>j</i></div>
<div class="t" style="left:425.0px;width:50.75px;top:393.7px;color:#333"><i>k</i><i>c</i><i>3</i><i>3</i><i>3</i></div>
<div class="t" style="left:478.75px;width:50.25px;top:393.7px;color:#333"><i>d</i><i>d</i></div>
<div class="t" style="left:532.0px;width:104.5px;top:393.7px;color:#333">白玻璃</div>
<div class="t" style="left:639.5px;width:50.5px;top:393.7px;color:#333"><i>d</i></div>
<div class="t" style="left:693.0px;width:51.0px;top:393.7px;color:#333">订单</div>
<div class="t" style="left:747.0px;width:97.0px;top:393.7px;color:#333"><i>2</i><i>5</i><i>0</i><i>0</i><i>*</i><i>9</i><i>0</i><i>0</i><i>*</i><i>6</i></div>
<div class="t" style="left:844.5px;width:54.75px;text-align:right;top:393.7px;color:#333"><i>2</i><i>3</i></div>
<div class="t" style="left:901.75px;width:40.25px;text-align:right;top:393.7px;color:#333"><i>5</i><i>0</i></div>
<div class="t" style="left:944.5px;width:47.5px;text-align:right;top:393.7px;color:#333"><i>5</i><i>1</i><i>.</i><i>7</i><i>5</i></div>
<div class="t" style="left:994.5px;width:64.25px;text-align:right;top:393.7px;color:#333"><i>2</i><i>5</i><i>8</i><i>7</i><i>.</i><i>5</i></div>
<div class="t" style="left:1063.75px;width:39.5px;top:393.7px;color:#333"><i><u>R</u></i><i><b>M</b></i><i><u>B</u></i></div>
<div class="t" style="left:1106.25px;width:117.75px;top:393.7px;color:#333"><i>d</i><i>f</i><i>f</i></div>
<div class="t" style="left:1227.0px;width:43.5px;top:393.7px;color:#333">超级管理员</div>
<div class="hl" style="left:140px;top:404.75px;width:1132px"></div>
<div class="a" style="left:156.5px;top:405.15px;width:26.8px;height:16.75px;background:#f4f4f4"></div>
<div class="t" style="left:156.5px;top:409.65px;width:26.8px;text-align:center;font-size:8.2px;color:#444;letter-spacing:0">16</div>
<div class="cb" style="left:144px;top:410.34999999999997px"></div>
<div class="t" style="left:185.8px;width:54.94999999999999px;top:410.45px;color:#333"><i><u>S</u></i><i>2</i><i>2</i><i>2</i><i>2</i><i>2</i></div>
<div class="t" style="left:243.75px;width:57.0px;top:410.45px;color:#333"><i>2</i><i>0</i><i>2</i><i>4</i><i>&#8211;</i><i>1</i><i>2</i><i>&#8211;</i><i>0</i><i>2</i></div>
<div class="t" style="left:303.75px;width:57.0px;top:410.45px;color:#333"><i>2</i><i>0</i><i>2</i><i>4</i><i>&#8211;</i><i>1</i><i>2</i><i>&#8211;</i><i>0</i><i>2</i></div>
<div class="t" style="left:363.75px;width:58.25px;top:410.45px;color:#333">博友<i>r</i><i>j</i></div>
<div class="t" style="left:425.0px;width:50.75px;top:410.45px;color:#333"><i>k</i><i>c</i><i>3</i><i>3</i><i>3</i></div>
<div class="t" style="left:478.75px;width:50.25px;top:410.45px;color:#333"><i>d</i><i>d</i></div>
<div class="t" style="left:532.0px;width:104.5px;top:410.45px;color:#333">白玻璃</div>
<div class="t" style="left:639.5px;width:50.5px;top:410.45px;color:#333"><i>7</i><i>7</i><i>7</i><i>7</i></div>
<div class="t" style="left:693.0px;width:51.0px;top:410.45px;color:#333">订单</div>
<div class="t" style="left:747.0px;width:97.0px;top:410.45px;color:#333"><i>2</i><i>5</i><i>0</i><i>0</i><i>*</i><i>9</i><i>0</i><i>0</i><i>*</i><i>6</i></div>
<div class="t" style="left:844.5px;width:54.75px;text-align:right;top:410.45px;color:#333"><i>1</i><i>2</i></div>
<div class="t" style="left:901.75px;width:40.25px;text-align:right;top:410.45px;color:#333"><i>7</i><i>0</i></div>
<div class="t" style="left:944.5px;width:47.5px;text-align:right;top:410.45px;color:#333"><i>2</i><i>7</i></div>
<div class="t" style="left:994.5px;width:64.25px;text-align:right;top:410.45px;color:#333"><i>1</i><i>8</i><i>9</i><i>0</i></div>
<div class="t" style="left:1063.75px;width:39.5px;top:410.45px;color:#333"><i><u>R</u></i><i><b>M</b></i><i><u>B</u></i></div>
<div class="t" style="left:1106.25px;width:117.75px;top:410.45px;color:#333"><i>s</i><i>b</i><i>b</i></div>
<div class="t" style="left:1227.0px;width:43.5px;top:410.45px;color:#333">超级管理员</div>
<div class="hl" style="left:140px;top:421.5px;width:1132px"></div>
<div class="a" style="left:156.5px;top:421.9px;width:26.8px;height:16.75px;background:#f4f4f4"></div>
<div class="t" style="left:156.5px;top:426.4px;width:26.8px;text-align:center;font-size:8.2px;color:#444;letter-spacing:0">17</div>
<div class="cb" style="left:144px;top:427.09999999999997px"></div>
<div class="t" style="left:185.8px;width:54.94999999999999px;top:427.2px;color:#333"><i><u>S</u></i><i>2</i><i>2</i><i>2</i><i>2</i><i>2</i></div>
<div class="t" style="left:243.75px;width:57.0px;top:427.2px;color:#333"><i>2</i><i>0</i><i>2</i><i>4</i><i>&#8211;</i><i>1</i><i>2</i><i>&#8211;</i><i>0</i><i>2</i></div>
<div class="t" style="left:303.75px;width:57.0px;top:427.2px;color:#333"><i>2</i><i>0</i><i>2</i><i>4</i><i>&#8211;</i><i>1</i><i>2</i><i>&#8211;</i><i>0</i><i>2</i></div>
<div class="t" style="left:363.75px;width:58.25px;top:427.2px;color:#333">博友<i>r</i><i>j</i></div>
<div class="t" style="left:425.0px;width:50.75px;top:427.2px;color:#333"><i>k</i><i>c</i><i>3</i><i>3</i><i>3</i></div>
<div class="t" style="left:478.75px;width:50.25px;top:427.2px;color:#333"><i>d</i><i>d</i></div>
<div class="t" style="left:532.0px;width:104.5px;top:427.2px;color:#333">白玻璃</div>
<div class="t" style="left:639.5px;width:50.5px;top:427.2px;color:#333"><i>d</i></div>
<div class="t" style="left:693.0px;width:51.0px;top:427.2px;color:#333">订单</div>
<div class="t" style="left:747.0px;width:97.0px;top:427.2px;color:#333"><i>2</i><i>5</i><i>0</i><i>0</i><i>*</i><i>9</i><i>0</i><i>0</i><i>*</i><i>6</i></div>
<div class="t" style="left:844.5px;width:54.75px;text-align:right;top:427.2px;color:#333"><i>1</i><i>2</i></div>
<div class="t" style="left:901.75px;width:40.25px;text-align:right;top:427.2px;color:#333"><i>7</i><i>0</i></div>
<div class="t" style="left:944.5px;width:47.5px;text-align:right;top:427.2px;color:#333"><i>2</i><i>7</i></div>
<div class="t" style="left:994.5px;width:64.25px;text-align:right;top:427.2px;color:#333"><i>1</i><i>8</i><i>9</i><i>0</i></div>
<div class="t" style="left:1063.75px;width:39.5px;top:427.2px;color:#333"><i><u>R</u></i><i><b>M</b></i><i><u>B</u></i></div>
<div class="t" style="left:1106.25px;width:117.75px;top:427.2px;color:#333"><i>s</i><i>b</i><i>b</i></div>
<div class="t" style="left:1227.0px;width:43.5px;top:427.2px;color:#333">超级管理员</div>
<div class="hl" style="left:140px;top:438.25px;width:1132px"></div>
<div class="a" style="left:156.5px;top:438.65px;width:26.8px;height:16.75px;background:#f4f4f4"></div>
<div class="t" style="left:156.5px;top:443.15px;width:26.8px;text-align:center;font-size:8.2px;color:#444;letter-spacing:0">18</div>
<div class="cb" style="left:144px;top:443.84999999999997px"></div>
<div class="t" style="left:185.8px;width:54.94999999999999px;top:443.95px;color:#333"><i><u>S</u></i><i>2</i><i>2</i><i>2</i><i>2</i><i>2</i></div>
<div class="t" style="left:243.75px;width:57.0px;top:443.95px;color:#333"><i>2</i><i>0</i><i>2</i><i>4</i><i>&#8211;</i><i>1</i><i>2</i><i>&#8211;</i><i>0</i><i>2</i></div>
<div class="t" style="left:303.75px;width:57.0px;top:443.95px;color:#333"><i>2</i><i>0</i><i>2</i><i>4</i><i>&#8211;</i><i>1</i><i>2</i><i>&#8211;</i><i>0</i><i>2</i></div>
<div class="t" style="left:363.75px;width:58.25px;top:443.95px;color:#333">博友<i>r</i><i>j</i></div>
<div class="t" style="left:425.0px;width:50.75px;top:443.95px;color:#333"><i><u>K</u></i><i><u>C</u></i><i>2</i><i>5</i><i>8</i></div>
<div class="t" style="left:478.75px;width:50.25px;top:443.95px;color:#333"><i>d</i><i>d</i></div>
<div class="t" style="left:532.0px;width:104.5px;top:443.95px;color:#333">玻璃原片</div>
<div class="t" style="left:639.5px;width:50.5px;top:443.95px;color:#333"><i>c</i><i>p</i><i>b</i><i>h</i></div>
<div class="t" style="left:747.0px;width:97.0px;top:443.95px;color:#333"><i>5</i><i>0</i><i>0</i><i>*</i><i>4</i><i>3</i><i>5</i><i>*</i><i>4</i></div>
<div class="t" style="left:844.5px;width:54.75px;text-align:right;top:443.95px;color:#333"><i>2</i><i>3</i></div>
<div class="t" style="left:901.75px;width:40.25px;text-align:right;top:443.95px;color:#333"><i>1</i><i>.</i><i>0</i><i>9</i></div>
<div class="t" style="left:944.5px;width:47.5px;text-align:right;top:443.95px;color:#333"><i>5</i><i>.</i><i>0</i><i>6</i></div>
<div class="t" style="left:994.5px;width:64.25px;text-align:right;top:443.95px;color:#333"><i>5</i><i>.</i><i>5</i><i>2</i></div>
<div class="t" style="left:1063.75px;width:39.5px;top:443.95px;color:#333"><i><u>R</u></i><i><b>M</b></i><i><u>B</u></i></div>
<div class="t" style="left:1106.25px;width:117.75px;top:443.95px;color:#333"><i>d</i><i>f</i><i>f</i></div>
<div class="t" style="left:1227.0px;width:43.5px;top:443.95px;color:#333">超级管理员</div>
<div class="hl" style="left:140px;top:455.0px;width:1132px"></div>
<div class="a" style="left:156.5px;top:455.4px;width:26.8px;height:16.75px;background:#f4f4f4"></div>
<div class="t" style="left:156.5px;top:459.9px;width:26.8px;text-align:center;font-size:8.2px;color:#444;letter-spacing:0">19</div>
<div class="cb" style="left:144px;top:460.59999999999997px"></div>
<div class="t" style="left:185.8px;width:54.94999999999999px;top:460.7px;color:#333"><i><u>S</u></i><i>2</i><i>2</i><i>2</i><i>2</i><i>2</i></div>
<div class="t" style="left:243.75px;width:57.0px;top:460.7px;color:#333"><i>2</i><i>0</i><i>2</i><i>4</i><i>&#8211;</i><i>1</i><i>2</i><i>&#8211;</i><i>0</i><i>2</i></div>
<div class="t" style="left:303.75px;width:57.0px;top:460.7px;color:#333"><i>2</i><i>0</i><i>2</i><i>4</i><i>&#8211;</i><i>1</i><i>2</i><i>&#8211;</i><i>0</i><i>2</i></div>
<div class="t" style="left:363.75px;width:58.25px;top:460.7px;color:#333">博友<i>r</i><i>j</i></div>
<div class="t" style="left:425.0px;width:50.75px;top:460.7px;color:#333"><i><u>K</u></i><i><u>C</u></i><i>2</i><i>5</i><i>8</i></div>
<div class="t" style="left:478.75px;width:50.25px;top:460.7px;color:#333"><i>d</i><i>d</i></div>
<div class="t" style="left:532.0px;width:104.5px;top:460.7px;color:#333">玻璃原片</div>
<div class="t" style="left:639.5px;width:50.5px;top:460.7px;color:#333"><i>c</i><i>p</i><i>b</i><i>h</i></div>
<div class="t" style="left:747.0px;width:97.0px;top:460.7px;color:#333"><i>5</i><i>0</i><i>0</i><i>*</i><i>6</i><i>0</i><i>0</i></div>
<div class="t" style="left:844.5px;width:54.75px;text-align:right;top:460.7px;color:#333"><i>2</i><i>3</i></div>
<div class="t" style="left:901.75px;width:40.25px;text-align:right;top:460.7px;color:#333"><i>0</i><i>.</i><i>5</i></div>
<div class="t" style="left:944.5px;width:47.5px;text-align:right;top:460.7px;color:#333"><i>6</i><i>9</i><i>0</i><i>0</i></div>
<div class="t" style="left:994.5px;width:64.25px;text-align:right;top:460.7px;color:#333"><i>3</i><i>4</i><i>5</i><i>0</i></div>
<div class="t" style="left:1063.75px;width:39.5px;top:460.7px;color:#333"><i><u>R</u></i><i><b>M</b></i><i><u>B</u></i></div>
<div class="t" style="left:1106.25px;width:117.75px;top:460.7px;color:#333"><i>d</i><i>f</i><i>f</i></div>
<div class="t" style="left:1227.0px;width:43.5px;top:460.7px;color:#333">超级管理员</div>
<div class="hl" style="left:140px;top:471.75px;width:1132px"></div>
<div class="a" style="left:156.5px;top:472.15px;width:26.8px;height:16.75px;background:#f4f4f4"></div>
<div class="t" style="left:156.5px;top:476.65px;width:26.8px;text-align:center;font-size:8.2px;color:#444;letter-spacing:0">20</div>
<div class="cb" style="left:144px;top:477.34999999999997px"></div>
<div class="t" style="left:185.8px;width:54.94999999999999px;top:477.45px;color:#333"><i><u>S</u></i><i>2</i><i>2</i><i>2</i><i>2</i><i>2</i></div>
<div class="t" style="left:243.75px;width:57.0px;top:477.45px;color:#333"><i>2</i><i>0</i><i>2</i><i>4</i><i>&#8211;</i><i>1</i><i>2</i><i>&#8211;</i><i>0</i><i>2</i></div>
<div class="t" style="left:303.75px;width:57.0px;top:477.45px;color:#333"><i>2</i><i>0</i><i>2</i><i>4</i><i>&#8211;</i><i>1</i><i>2</i><i>&#8211;</i><i>0</i><i>2</i></div>
<div class="t" style="left:363.75px;width:58.25px;top:477.45px;color:#333">博友<i>r</i><i>j</i></div>
<div class="t" style="left:425.0px;width:50.75px;top:477.45px;color:#333"><i><u>K</u></i><i><u>C</u></i><i>2</i><i>5</i><i>8</i></div>
<div class="t" style="left:478.75px;width:50.25px;top:477.45px;color:#333"><i>d</i><i>d</i></div>
<div class="t" style="left:532.0px;width:104.5px;top:477.45px;color:#333">玻璃原片</div>
<div class="t" style="left:639.5px;width:50.5px;top:477.45px;color:#333"><i>c</i><i>p</i><i>b</i><i>h</i></div>
<div class="t" style="left:747.0px;width:97.0px;top:477.45px;color:#333"><i>5</i><i>0</i><i>0</i><i>*</i><i>7</i><i>0</i><i>0</i></div>
<div class="t" style="left:844.5px;width:54.75px;text-align:right;top:477.45px;color:#333"><i>1</i><i>2</i></div>
<div class="t" style="left:901.75px;width:40.25px;text-align:right;top:477.45px;color:#333"><i>0</i><i>.</i><i>2</i><i>3</i></div>
<div class="t" style="left:944.5px;width:47.5px;text-align:right;top:477.45px;color:#333"><i>4</i><i>2</i><i>0</i><i>0</i></div>
<div class="t" style="left:994.5px;width:64.25px;text-align:right;top:477.45px;color:#333"><i>9</i><i>6</i><i>6</i></div>
<div class="t" style="left:1063.75px;width:39.5px;top:477.45px;color:#333"><i><u>R</u></i><i><b>M</b></i><i><u>B</u></i></div>
<div class="t" style="left:1106.25px;width:117.75px;top:477.45px;color:#333"><i>s</i><i>b</i><i>b</i></div>
<div class="t" style="left:1227.0px;width:43.5px;top:477.45px;color:#333">超级管理员</div>
<div class="hl" style="left:140px;top:488.5px;width:1132px"></div>
<div class="a" style="left:156.5px;top:488.9px;width:26.8px;height:16.75px;background:#f4f4f4"></div>
<div class="t" style="left:156.5px;top:493.4px;width:26.8px;text-align:center;font-size:8.2px;color:#444;letter-spacing:0">21</div>
<div class="cb" style="left:144px;top:494.09999999999997px"></div>
<div class="t" style="left:185.8px;width:54.94999999999999px;top:494.2px;color:#333"><i>3</i><i>4</i><i>3</i><i>4</i><i>3</i></div>
<div class="t" style="left:243.75px;width:57.0px;top:494.2px;color:#333"><i>2</i><i>0</i><i>2</i><i>3</i><i>&#8211;</i><i>0</i><i>8</i><i>&#8211;</i><i>2</i><i>4</i></div>
<div class="t" style="left:303.75px;width:57.0px;top:494.2px;color:#333"><i>2</i><i>0</i><i>2</i><i>3</i><i>&#8211;</i><i>0</i><i>8</i><i>&#8211;</i><i>2</i><i>4</i></div>
<div class="t" style="left:363.75px;width:58.25px;top:494.2px;color:#333">博友<i>d</i><i>d</i><i>d</i></div>
<div class="t" style="left:425.0px;width:50.75px;top:494.2px;color:#333"><i>3</i><i>4</i><i>3</i><i>3</i><i>3</i></div>
<div class="t" style="left:532.0px;width:104.5px;top:494.2px;color:#333">订单</div>
<div class="t" style="left:639.5px;width:50.5px;top:494.2px;color:#333">订单</div>
<div class="t" style="left:747.0px;width:97.0px;top:494.2px;color:#333"><i>2</i><i>3</i>订单</div>
<div class="t" style="left:844.5px;width:54.75px;text-align:right;top:494.2px;color:#333"><i>2</i></div>
<div class="t" style="left:901.75px;width:40.25px;text-align:right;top:494.2px;color:#333"><i>3</i><i>4</i></div>
<div class="t" style="left:944.5px;width:47.5px;text-align:right;top:494.2px;color:#333"><i>0</i></div>
<div class="t" style="left:994.5px;width:64.25px;text-align:right;top:494.2px;color:#333"><i>6</i><i>8</i></div>
<div class="t" style="left:1063.75px;width:39.5px;top:494.2px;color:#333"><i><u>R</u></i><i><b>M</b></i><i><u>B</u></i></div>
<div class="t" style="left:1227.0px;width:43.5px;top:494.2px;color:#333">直接订单入库</div>
<div class="hl" style="left:140px;top:505.25px;width:1132px"></div>
<div class="a" style="left:156.5px;top:505.65px;width:26.8px;height:16.75px;background:#f4f4f4"></div>
<div class="t" style="left:156.5px;top:510.15px;width:26.8px;text-align:center;font-size:8.2px;color:#444;letter-spacing:0">22</div>
<div class="cb" style="left:144px;top:510.84999999999997px"></div>
<div class="t" style="left:185.8px;width:54.94999999999999px;top:510.95px;color:#333"><i>s</i><i>h</i><i>d</i><i>h</i><i>3</i><i>3</i><i>3</i></div>
<div class="t" style="left:243.75px;width:57.0px;top:510.95px;color:#333"><i>2</i><i>0</i><i>2</i><i>4</i><i>&#8211;</i><i>0</i><i>8</i><i>&#8211;</i><i>2</i><i>5</i></div>
<div class="t" style="left:303.75px;width:57.0px;top:510.95px;color:#333"><i>2</i><i>0</i><i>2</i><i>4</i><i>&#8211;</i><i>0</i><i>8</i><i>&#8211;</i><i>2</i><i>5</i></div>
<div class="t" style="left:363.75px;width:58.25px;top:510.95px;color:#333">收到</div>
<div class="t" style="left:425.0px;width:50.75px;top:510.95px;color:#333"><i>c</i><i>k</i><i>6</i><i>6</i><i>6</i><i>6</i></div>
<div class="t" style="left:532.0px;width:104.5px;top:510.95px;color:#333"><i>j</i><i>i</i><i>n</i><i>d</i><i>b</i></div>
<div class="t" style="left:747.0px;width:97.0px;top:510.95px;color:#333"><i>7</i><i>5</i><i>2</i><i>*</i><i>6</i><i>3</i><i>8</i></div>
<div class="t" style="left:844.5px;width:54.75px;text-align:right;top:510.95px;color:#333"><i>4</i></div>
<div class="t" style="left:901.75px;width:40.25px;text-align:right;top:510.95px;color:#333"><i>3</i><i>5</i><i>3</i><i>1</i><i>.</i><i>1</i><i>8</i></div>
<div class="t" style="left:944.5px;width:47.5px;text-align:right;top:510.95px;color:#333"><i>1</i><i>9</i><i>1</i><i>9</i><i>.</i><i>1</i><i>2</i></div>
<div class="t" style="left:994.5px;width:64.25px;text-align:right;top:510.95px;color:#333"><i>1</i><i>4</i><i>1</i><i>2</i><i>4</i><i>.</i><i>7</i><i>2</i></div>
<div class="t" style="left:1063.75px;width:39.5px;top:510.95px;color:#333"><i><u>R</u></i><i><b>M</b></i><i><u>B</u></i></div>
<div class="t" style="left:1106.25px;width:117.75px;top:510.95px;color:#333"><i>b</i><i>z</i></div>
<div class="t" style="left:1227.0px;width:43.5px;top:510.95px;color:#333">直接订单入库</div>
<div class="hl" style="left:140px;top:522.0px;width:1132px"></div>
<div class="a" style="left:156.5px;top:522.4px;width:26.8px;height:16.75px;background:#f4f4f4"></div>
<div class="t" style="left:156.5px;top:526.9px;width:26.8px;text-align:center;font-size:8.2px;color:#444;letter-spacing:0">23</div>
<div class="cb" style="left:144px;top:527.6px"></div>
<div class="t" style="left:185.8px;width:54.94999999999999px;top:527.6999999999999px;color:#333"><i>s</i><i>h</i><i>d</i><i>h</i><i>3</i><i>3</i><i>3</i></div>
<div class="t" style="left:243.75px;width:57.0px;top:527.6999999999999px;color:#333"><i>2</i><i>0</i><i>2</i><i>4</i><i>&#8211;</i><i>0</i><i>8</i><i>&#8211;</i><i>2</i><i>5</i></div>
<div class="t" style="left:303.75px;width:57.0px;top:527.6999999999999px;color:#333"><i>2</i><i>0</i><i>2</i><i>4</i><i>&#8211;</i><i>0</i><i>8</i><i>&#8211;</i><i>2</i><i>5</i></div>
<div class="t" style="left:363.75px;width:58.25px;top:527.6999999999999px;color:#333">收到</div>
<div class="t" style="left:425.0px;width:50.75px;top:527.6999999999999px;color:#333"><i>c</i><i>k</i><i>6</i><i>6</i><i>6</i><i>6</i></div>
<div class="t" style="left:532.0px;width:104.5px;top:527.6999999999999px;color:#333"><i>j</i><i>i</i><i>n</i><i>d</i><i>b</i></div>
<div class="t" style="left:693.0px;width:51.0px;top:527.6999999999999px;color:#333"><i>d</i><i>d</i><i>d</i></div>
<div class="t" style="left:747.0px;width:97.0px;top:527.6999999999999px;color:#333"><i>7</i><i>5</i><i>2</i><i>*</i><i>6</i><i>3</i><i>8</i></div>
<div class="t" style="left:844.5px;width:54.75px;text-align:right;top:527.6999999999999px;color:#333"><i>4</i></div>
<div class="t" style="left:901.75px;width:40.25px;text-align:right;top:527.6999999999999px;color:#333"><i>3</i><i>5</i><i>3</i><i>1</i><i>.</i><i>1</i><i>8</i></div>
<div class="t" style="left:944.5px;width:47.5px;text-align:right;top:527.6999999999999px;color:#333"><i>1</i><i>9</i><i>1</i><i>9</i><i>.</i><i>1</i><i>2</i></div>
<div class="t" style="left:994.5px;width:64.25px;text-align:right;top:527.6999999999999px;color:#333"><i>6</i><i>7</i><i>7</i><i>6</i><i>7</i><i>5</i><i>8</i><i>.</i><i>1</i><i>6</i></div>
<div class="t" style="left:1063.75px;width:39.5px;top:527.6999999999999px;color:#333"><i><u>R</u></i><i><b>M</b></i><i><u>B</u></i></div>
<div class="t" style="left:1106.25px;width:117.75px;top:527.6999999999999px;color:#333"><i>b</i><i>z</i></div>
<div class="t" style="left:1227.0px;width:43.5px;top:527.6999999999999px;color:#333">直接订单入库</div>
<div class="hl" style="left:140px;top:538.75px;width:1132px"></div>
<div class="a" style="left:156.5px;top:539.15px;width:26.8px;height:16.75px;background:#f4f4f4"></div>
<div class="t" style="left:156.5px;top:543.65px;width:26.8px;text-align:center;font-size:8.2px;color:#444;letter-spacing:0">24</div>
<div class="cb" style="left:144px;top:544.35px"></div>
<div class="t" style="left:185.8px;width:54.94999999999999px;top:544.4499999999999px;color:#333"><i>s</i><i>h</i><i>d</i><i>h</i><i>3</i><i>3</i><i>3</i></div>
<div class="t" style="left:243.75px;width:57.0px;top:544.4499999999999px;color:#333"><i>2</i><i>0</i><i>2</i><i>4</i><i>&#8211;</i><i>0</i><i>8</i><i>&#8211;</i><i>2</i><i>5</i></div>
<div class="t" style="left:303.75px;width:57.0px;top:544.4499999999999px;color:#333"><i>2</i><i>0</i><i>2</i><i>4</i><i>&#8211;</i><i>0</i><i>8</i><i>&#8211;</i><i>2</i><i>5</i></div>
<div class="t" style="left:363.75px;width:58.25px;top:544.4499999999999px;color:#333">收到</div>
<div class="t" style="left:425.0px;width:50.75px;top:544.4499999999999px;color:#333"><i>c</i><i>k</i><i>6</i><i>6</i><i>6</i><i>6</i></div>
<div class="t" style="left:532.0px;width:104.5px;top:544.4499999999999px;color:#333"><i>j</i><i>i</i><i>n</i><i>d</i><i>b</i></div>
<div class="t" style="left:693.0px;width:51.0px;top:544.4499999999999px;color:#333"><i>7</i><i>7</i><i>7</i></div>
<div class="t" style="left:747.0px;width:97.0px;top:544.4499999999999px;color:#333"><i>7</i><i>5</i><i>2</i><i>*</i><i>6</i><i>3</i><i>8</i></div>
<div class="t" style="left:844.5px;width:54.75px;text-align:right;top:544.4499999999999px;color:#333"><i>4</i></div>
<div class="t" style="left:901.75px;width:40.25px;text-align:right;top:544.4499999999999px;color:#333"><i>0</i><i>.</i><i>8</i><i>5</i></div>
<div class="t" style="left:944.5px;width:47.5px;text-align:right;top:544.4499999999999px;color:#333"><i>1</i><i>9</i><i>1</i><i>9</i><i>.</i><i>1</i><i>2</i></div>
<div class="t" style="left:994.5px;width:64.25px;text-align:right;top:544.4499999999999px;color:#333"><i>1</i><i>6</i><i>3</i><i>1</i><i>.</i><i>2</i><i>5</i></div>
<div class="t" style="left:1063.75px;width:39.5px;top:544.4499999999999px;color:#333"><i><u>R</u></i><i><b>M</b></i><i><u>B</u></i></div>
<div class="t" style="left:1106.25px;width:117.75px;top:544.4499999999999px;color:#333"><i>b</i><i>z</i><i>5</i><i>5</i><i>5</i></div>
<div class="t" style="left:1227.0px;width:43.5px;top:544.4499999999999px;color:#333">直接订单入库</div>
<div class="hl" style="left:140px;top:555.5px;width:1132px"></div>
<div class="a" style="left:156.5px;top:555.9px;width:26.8px;height:16.75px;background:#f4f4f4"></div>
<div class="t" style="left:156.5px;top:560.4px;width:26.8px;text-align:center;font-size:8.2px;color:#444;letter-spacing:0">25</div>
<div class="cb" style="left:144px;top:561.1px"></div>
<div class="t" style="left:185.8px;width:54.94999999999999px;top:561.1999999999999px;color:#333"><i>s</i><i>h</i><i>d</i><i>h</i><i>3</i><i>3</i><i>3</i></div>
<div class="t" style="left:243.75px;width:57.0px;top:561.1999999999999px;color:#333"><i>2</i><i>0</i><i>2</i><i>4</i><i>&#8211;</i><i>0</i><i>8</i><i>&#8211;</i><i>2</i><i>5</i></div>
<div class="t" style="left:303.75px;width:57.0px;top:561.1999999999999px;color:#333"><i>2</i><i>0</i><i>2</i><i>4</i><i>&#8211;</i><i>0</i><i>8</i><i>&#8211;</i><i>2</i><i>5</i></div>
<div class="t" style="left:363.75px;width:58.25px;top:561.1999999999999px;color:#333">收到</div>
<div class="t" style="left:425.0px;width:50.75px;top:561.1999999999999px;color:#333"><i>c</i><i>k</i><i>6</i><i>6</i><i>6</i><i>6</i></div>
<div class="t" style="left:532.0px;width:104.5px;top:561.1999999999999px;color:#333"><i>j</i><i>i</i><i>n</i><i>d</i><i>b</i></div>
<div class="t" style="left:747.0px;width:97.0px;top:561.1999999999999px;color:#333"><i>7</i><i>5</i><i>2</i><i>*</i><i>6</i><i>3</i><i>8</i></div>
<div class="t" style="left:844.5px;width:54.75px;text-align:right;top:561.1999999999999px;color:#333"><i>4</i></div>
<div class="t" style="left:901.75px;width:40.25px;text-align:right;top:561.1999999999999px;color:#333"><i>3</i><i>5</i><i>3</i><i>1</i><i>.</i><i>1</i><i>8</i></div>
<div class="t" style="left:944.5px;width:47.5px;text-align:right;top:561.1999999999999px;color:#333"><i>1</i><i>9</i><i>1</i><i>9</i><i>.</i><i>1</i><i>2</i></div>
<div class="t" style="left:994.5px;width:64.25px;text-align:right;top:561.1999999999999px;color:#333"><i>1</i><i>4</i><i>1</i><i>2</i><i>4</i><i>.</i><i>7</i><i>2</i></div>
<div class="t" style="left:1063.75px;width:39.5px;top:561.1999999999999px;color:#333"><i><u>R</u></i><i><b>M</b></i><i><u>B</u></i></div>
<div class="t" style="left:1106.25px;width:117.75px;top:561.1999999999999px;color:#333"><i>b</i><i>z</i></div>
<div class="t" style="left:1227.0px;width:43.5px;top:561.1999999999999px;color:#333">直接订单入库</div>
<div class="hl" style="left:140px;top:572.25px;width:1132px"></div>
<div class="a" style="left:156.5px;top:572.65px;width:26.8px;height:16.75px;background:#f4f4f4"></div>
<div class="t" style="left:156.5px;top:577.15px;width:26.8px;text-align:center;font-size:8.2px;color:#444;letter-spacing:0">26</div>
<div class="cb" style="left:144px;top:577.85px"></div>
<div class="t" style="left:185.8px;width:54.94999999999999px;top:577.9499999999999px;color:#333"><i>s</i><i>3</i><i>4</i><i>3</i><i>4</i><i>3</i><i>4</i></div>
<div class="t" style="left:243.75px;width:57.0px;top:577.9499999999999px;color:#333"><i>2</i><i>0</i><i>2</i><i>3</i><i>&#8211;</i><i>0</i><i>6</i><i>&#8211;</i><i>0</i><i>4</i></div>
<div class="t" style="left:303.75px;width:57.0px;top:577.9499999999999px;color:#333"><i>2</i><i>0</i><i>2</i><i>3</i><i>&#8211;</i><i>0</i><i>6</i><i>&#8211;</i><i>0</i><i>4</i></div>
<div class="t" style="left:363.75px;width:58.25px;top:577.9499999999999px;color:#333">集华</div>
<div class="t" style="left:425.0px;width:50.75px;top:577.9499999999999px;color:#333"><i><u>A</u></i><i>0</i><i>0</i><i>0</i><i>0</i><i>2</i></div>
<div class="t" style="left:532.0px;width:104.5px;top:577.9499999999999px;color:#333"><i><b>M</b></i><i><u>C</u></i><i>0</i><i>0</i></div>
<div class="t" style="left:639.5px;width:50.5px;top:577.9499999999999px;color:#333"><i><u>C</u></i><i><u>Z</u></i><i>0</i><i>0</i></div>
<div class="t" style="left:693.0px;width:51.0px;top:577.9499999999999px;color:#333"><i><u>P</u></i><i><u>P</u></i><i>0</i><i>0</i></div>
<div class="t" style="left:747.0px;width:97.0px;top:577.9499999999999px;color:#333"><i><u>X</u></i><i><u>H</u></i><i><u>Y</u></i><i>0</i><i>0</i></div>
<div class="t" style="left:844.5px;width:54.75px;text-align:right;top:577.9499999999999px;color:#333"><i>1</i><i>2</i></div>
<div class="t" style="left:901.75px;width:40.25px;text-align:right;top:577.9499999999999px;color:#333"><i>2</i><i>5</i></div>
<div class="t" style="left:944.5px;width:47.5px;text-align:right;top:577.9499999999999px;color:#333"><i>0</i></div>
<div class="t" style="left:994.5px;width:64.25px;text-align:right;top:577.9499999999999px;color:#333"><i>3</i><i>0</i><i>0</i></div>
<div class="t" style="left:1063.75px;width:39.5px;top:577.9499999999999px;color:#333"><i><u>R</u></i><i><b>M</b></i><i><u>B</u></i></div>
<div class="t" style="left:1227.0px;width:43.5px;top:577.9499999999999px;color:#333">直接订单入库</div>
<div class="hl" style="left:140px;top:589.0px;width:1132px"></div>
<div class="a" style="left:156.5px;top:589.4px;width:26.8px;height:16.75px;background:#f4f4f4"></div>
<div class="t" style="left:156.5px;top:593.9px;width:26.8px;text-align:center;font-size:8.2px;color:#444;letter-spacing:0">27</div>
<div class="cb" style="left:144px;top:594.6px"></div>
<div class="t" style="left:185.8px;width:54.94999999999999px;top:594.6999999999999px;color:#333">哈哈哈</div>
<div class="t" style="left:243.75px;width:57.0px;top:594.6999999999999px;color:#333"><i>2</i><i>0</i><i>2</i><i>3</i><i>&#8211;</i><i>0</i><i>7</i><i>&#8211;</i><i>2</i><i>0</i></div>
<div class="t" style="left:303.75px;width:57.0px;top:594.6999999999999px;color:#333"><i>2</i><i>0</i><i>2</i><i>3</i><i>&#8211;</i><i>0</i><i>7</i><i>&#8211;</i><i>2</i><i>0</i></div>
<div class="t" style="left:363.75px;width:58.25px;top:594.6999999999999px;color:#333">集华</div>
<div class="t" style="left:425.0px;width:50.75px;top:594.6999999999999px;color:#333"><i><u>A</u></i><i>0</i><i>0</i><i>0</i><i>0</i><i>2</i></div>
<div class="t" style="left:532.0px;width:104.5px;top:594.6999999999999px;color:#333"><i><b>M</b></i><i><u>C</u></i><i>0</i><i>0</i></div>
<div class="t" style="left:639.5px;width:50.5px;top:594.6999999999999px;color:#333"><i><u>C</u></i><i><u>Z</u></i><i>0</i><i>0</i></div>
<div class="t" style="left:693.0px;width:51.0px;top:594.6999999999999px;color:#333"><i><u>P</u></i><i><u>P</u></i><i>0</i><i>0</i></div>
<div class="t" style="left:747.0px;width:97.0px;top:594.6999999999999px;color:#333"><i><u>X</u></i><i><u>H</u></i><i><u>Y</u></i><i>0</i><i>0</i></div>
<div class="t" style="left:844.5px;width:54.75px;text-align:right;top:594.6999999999999px;color:#333"><i>3</i></div>
<div class="t" style="left:901.75px;width:40.25px;text-align:right;top:594.6999999999999px;color:#333"><i>3</i></div>
<div class="t" style="left:944.5px;width:47.5px;text-align:right;top:594.6999999999999px;color:#333"><i>0</i></div>
<div class="t" style="left:994.5px;width:64.25px;text-align:right;top:594.6999999999999px;color:#333"><i>9</i></div>
<div class="t" style="left:1063.75px;width:39.5px;top:594.6999999999999px;color:#333"><i><u>R</u></i><i><b>M</b></i><i><u>B</u></i></div>
<div class="t" style="left:1227.0px;width:43.5px;top:594.6999999999999px;color:#333">直接订单入库</div>
<div class="hl" style="left:140px;top:605.75px;width:1132px"></div>
<div class="vl" style="left:156.0px;top:153.9px;height:117.24999999999997px;background:#ececec"></div>
<div class="vl" style="left:156.0px;top:288.7px;height:322.3px;background:#ececec"></div>
<div class="vl" style="left:182.8px;top:153.9px;height:117.24999999999997px;background:#ececec"></div>
<div class="vl" style="left:182.8px;top:288.7px;height:322.3px;background:#ececec"></div>
<div class="vl" style="left:240.75px;top:153.9px;height:117.24999999999997px;background:#ececec"></div>
<div class="vl" style="left:240.75px;top:288.7px;height:322.3px;background:#ececec"></div>
<div class="vl" style="left:300.75px;top:153.9px;height:117.24999999999997px;background:#ececec"></div>
<div class="vl" style="left:300.75px;top:288.7px;height:322.3px;background:#ececec"></div>
<div class="vl" style="left:360.75px;top:153.9px;height:117.24999999999997px;background:#ececec"></div>
<div class="vl" style="left:360.75px;top:288.7px;height:322.3px;background:#ececec"></div>
<div class="vl" style="left:422.0px;top:153.9px;height:117.24999999999997px;background:#ececec"></div>
<div class="vl" style="left:422.0px;top:288.7px;height:322.3px;background:#ececec"></div>
<div class="vl" style="left:475.75px;top:153.9px;height:117.24999999999997px;background:#ececec"></div>
<div class="vl" style="left:475.75px;top:288.7px;height:322.3px;background:#ececec"></div>
<div class="vl" style="left:529.0px;top:153.9px;height:117.24999999999997px;background:#ececec"></div>
<div class="vl" style="left:529.0px;top:288.7px;height:322.3px;background:#ececec"></div>
<div class="vl" style="left:636.5px;top:153.9px;height:117.24999999999997px;background:#ececec"></div>
<div class="vl" style="left:636.5px;top:288.7px;height:322.3px;background:#ececec"></div>
<div class="vl" style="left:690.0px;top:153.9px;height:117.24999999999997px;background:#ececec"></div>
<div class="vl" style="left:690.0px;top:288.7px;height:322.3px;background:#ececec"></div>
<div class="vl" style="left:744.0px;top:153.9px;height:117.24999999999997px;background:#ececec"></div>
<div class="vl" style="left:744.0px;top:288.7px;height:322.3px;background:#ececec"></div>
<div class="vl" style="left:844.0px;top:153.9px;height:117.24999999999997px;background:#ececec"></div>
<div class="vl" style="left:844.0px;top:288.7px;height:322.3px;background:#ececec"></div>
<div class="vl" style="left:901.25px;top:153.9px;height:117.24999999999997px;background:#ececec"></div>
<div class="vl" style="left:901.25px;top:288.7px;height:322.3px;background:#ececec"></div>
<div class="vl" style="left:944.0px;top:153.9px;height:117.24999999999997px;background:#ececec"></div>
<div class="vl" style="left:944.0px;top:288.7px;height:322.3px;background:#ececec"></div>
<div class="vl" style="left:994.0px;top:153.9px;height:117.24999999999997px;background:#ececec"></div>
<div class="vl" style="left:994.0px;top:288.7px;height:322.3px;background:#ececec"></div>
<div class="vl" style="left:1060.75px;top:153.9px;height:117.24999999999997px;background:#ececec"></div>
<div class="vl" style="left:1060.75px;top:288.7px;height:322.3px;background:#ececec"></div>
<div class="vl" style="left:1103.25px;top:153.9px;height:117.24999999999997px;background:#ececec"></div>
<div class="vl" style="left:1103.25px;top:288.7px;height:322.3px;background:#ececec"></div>
<div class="vl" style="left:1224.0px;top:153.9px;height:117.24999999999997px;background:#ececec"></div>
<div class="vl" style="left:1224.0px;top:288.7px;height:322.3px;background:#ececec"></div>
<svg class="a" style="left:1272px;top:156.5px" width="7" height="5" viewBox="0 0 7 5"><path d="M0.5 4.5H6.5L3.5 0.5Z" fill="#777"/></svg>
<div class="a" style="left:1272.5px;top:165px;width:5.5px;height:202px;border-radius:3px;background:#888"></div>
<svg class="a" style="left:1272px;top:602px" width="7" height="5" viewBox="0 0 7 5"><path d="M0.5 0.5H6.5L3.5 4.5Z" fill="#777"/></svg>
<div class="a" style="left:140px;top:609.5px;width:1140px;height:9.5px;background:#fff"></div>
<svg class="a" style="left:143.5px;top:611.2px" width="5.5" height="6" viewBox="0 0 5.5 6"><path d="M5.2 0V6L0.3 3Z" fill="#7a7a7a"/></svg>
<div class="a" style="left:153px;top:611.4px;width:992px;height:5.5px;border-radius:3px;background:#888"></div>
<svg class="a" style="left:1263px;top:611.2px" width="5.5" height="6" viewBox="0 0 5.5 6"><path d="M0.3 0V6L5.2 3Z" fill="#7a7a7a"/></svg>
<div class="a" style="left:140px;top:619px;width:1140px;height:2px;background:#38e6e8"></div>
<div class="a" style="left:140px;top:621px;width:1140px;height:1px;background:#d0d0d0"></div>
<div class="btn" style="left:146.8px;top:630.2px;width:171px;border-radius:12px"></div>
<svg class="a" style="left:159px;top:637px" width="10" height="10" viewBox="0 0 10 10"><path d="M0.7 0.7H7.8L9.3 2.2V9.3H0.7Z" fill="none" stroke="#fff" stroke-width="1.3"/><rect x="2.5" y="0.7" width="4.5" height="2.8" fill="#fff"/><rect x="2.5" y="5.5" width="5" height="3.8" fill="none" stroke="#fff" stroke-width="1"/></svg>
<div class="a" style="left:172.5px;top:637px;font-size:10px;line-height:12px;color:#fff;white-space:nowrap">将以上标识记录退回第一页面</div>
</body></html>
